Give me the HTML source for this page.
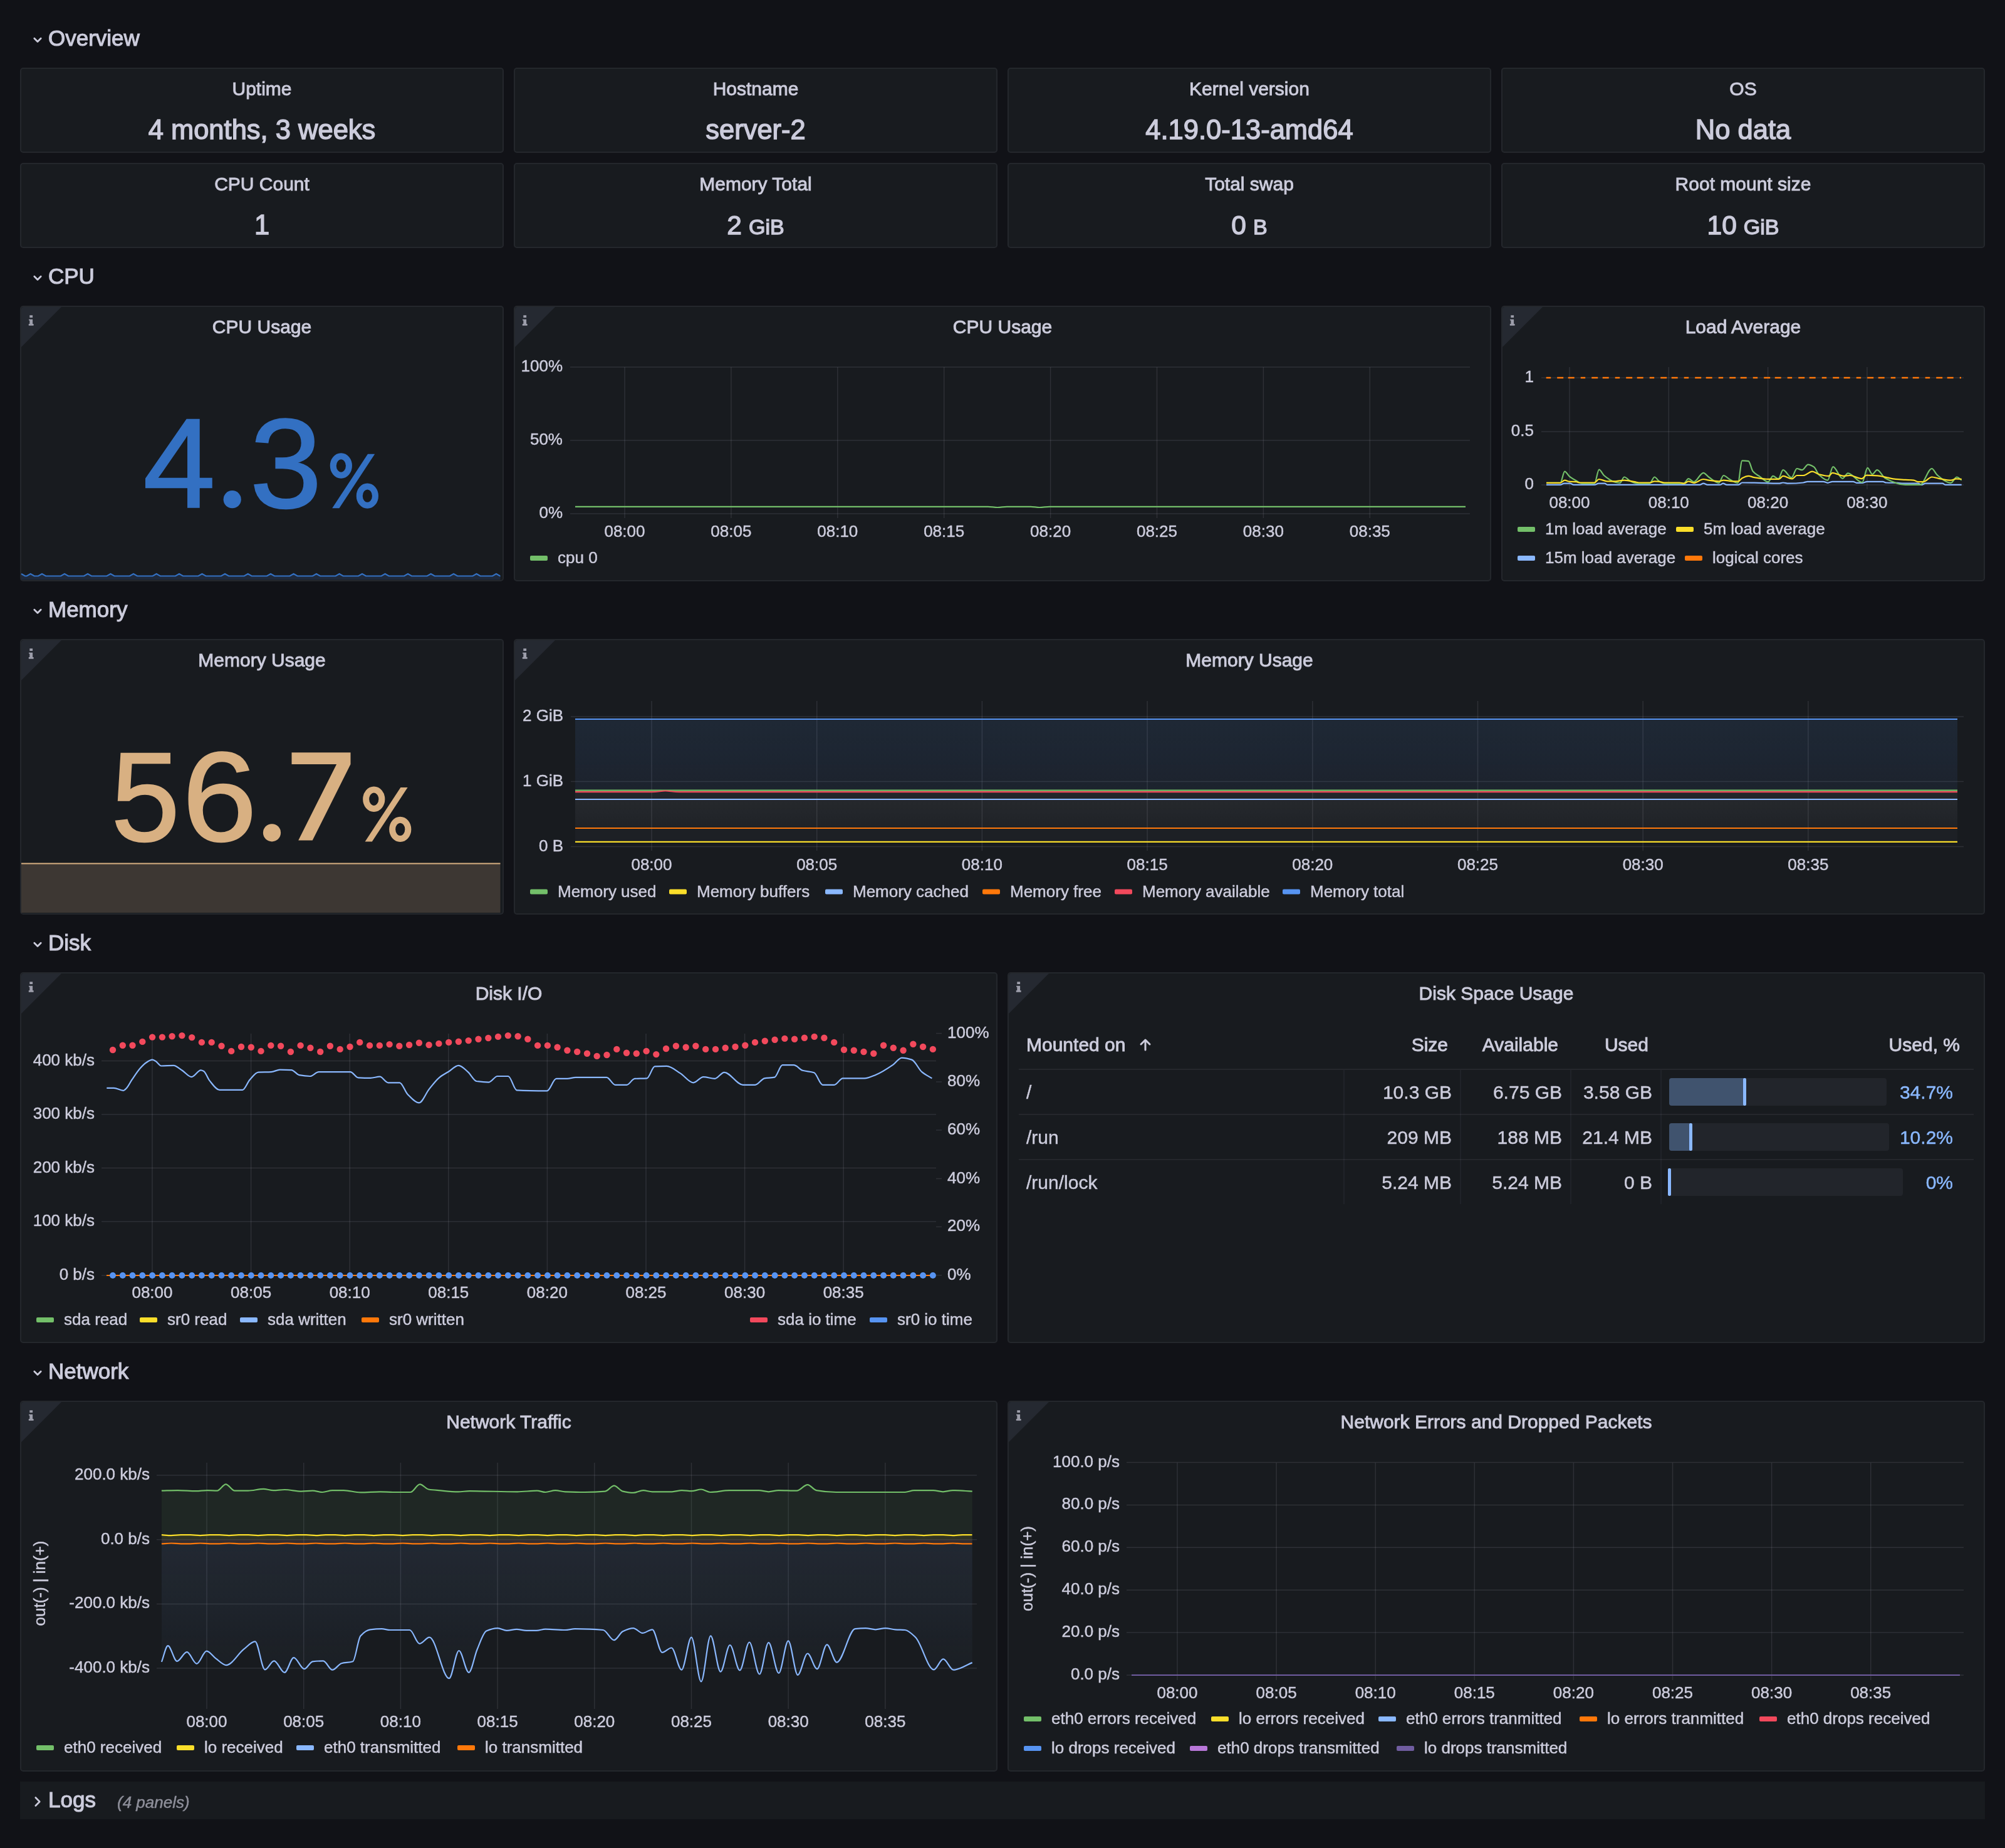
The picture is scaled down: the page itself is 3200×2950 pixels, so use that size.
<!DOCTYPE html>
<html><head><meta charset="utf-8"><title>Node Exporter Dashboard</title>
<style>
html,body{margin:0;padding:0;background:#111217;width:3200px;height:2950px;overflow:hidden}
body{position:relative;font-family:"Liberation Sans", sans-serif}
.p{position:absolute;box-sizing:border-box;background:#181b1f;border:2px solid rgba(204,204,220,0.07);border-radius:5px}
svg{position:absolute;left:0;top:0;will-change:transform}
text{font-family:"Liberation Sans", sans-serif}
.tt,.th{stroke-width:0.9px}
.rt{stroke-width:1.1px}
.tv{stroke-width:1.4px}
</style></head><body>
<div class="p" style="left:32px;top:108px;width:772px;height:136px"></div><div class="p" style="left:820px;top:108px;width:772px;height:136px"></div><div class="p" style="left:1608px;top:108px;width:772px;height:136px"></div><div class="p" style="left:2396px;top:108px;width:772px;height:136px"></div><div class="p" style="left:32px;top:260px;width:772px;height:136px"></div><div class="p" style="left:820px;top:260px;width:772px;height:136px"></div><div class="p" style="left:1608px;top:260px;width:772px;height:136px"></div><div class="p" style="left:2396px;top:260px;width:772px;height:136px"></div><div class="p" style="left:32px;top:488px;width:772px;height:440px"></div><div class="p" style="left:820px;top:488px;width:1560px;height:440px"></div><div class="p" style="left:2396px;top:488px;width:772px;height:440px"></div><div class="p" style="left:32px;top:1020px;width:772px;height:440px"></div><div class="p" style="left:820px;top:1020px;width:2348px;height:440px"></div><div class="p" style="left:32px;top:1552px;width:1560px;height:592px"></div><div class="p" style="left:1608px;top:1552px;width:1560px;height:592px"></div><div class="p" style="left:32px;top:2236px;width:1560px;height:592px"></div><div class="p" style="left:1608px;top:2236px;width:1560px;height:592px"></div>
<svg width="3200" height="2950" viewBox="0 0 3200 2950">
<path d="M54.8 61.3 L60 66.5 L65.2 61.3" fill="none" stroke="#ccccdc" stroke-width="2.8" stroke-linecap="round" stroke-linejoin="round"/>
<text x="77" y="72.5" font-size="35" fill="#ccccdc" stroke="#ccccdc" stroke-width="0.45" text-anchor="start" class="rt">Overview</text>
<path d="M54.8 441.3 L60 446.5 L65.2 441.3" fill="none" stroke="#ccccdc" stroke-width="2.8" stroke-linecap="round" stroke-linejoin="round"/>
<text x="77" y="452.5" font-size="35" fill="#ccccdc" stroke="#ccccdc" stroke-width="0.45" text-anchor="start" class="rt">CPU</text>
<path d="M54.8 973.3 L60 978.5 L65.2 973.3" fill="none" stroke="#ccccdc" stroke-width="2.8" stroke-linecap="round" stroke-linejoin="round"/>
<text x="77" y="984.5" font-size="35" fill="#ccccdc" stroke="#ccccdc" stroke-width="0.45" text-anchor="start" class="rt">Memory</text>
<path d="M54.8 1505.3 L60 1510.5 L65.2 1505.3" fill="none" stroke="#ccccdc" stroke-width="2.8" stroke-linecap="round" stroke-linejoin="round"/>
<text x="77" y="1516.5" font-size="35" fill="#ccccdc" stroke="#ccccdc" stroke-width="0.45" text-anchor="start" class="rt">Disk</text>
<path d="M54.8 2189.3 L60 2194.5 L65.2 2189.3" fill="none" stroke="#ccccdc" stroke-width="2.8" stroke-linecap="round" stroke-linejoin="round"/>
<text x="77" y="2200.5" font-size="35" fill="#ccccdc" stroke="#ccccdc" stroke-width="0.45" text-anchor="start" class="rt">Network</text>
<text x="418" y="152" font-size="30" fill="#ccccdc" stroke="#ccccdc" stroke-width="0.45" text-anchor="middle" class="tt">Uptime</text>
<text x="418" y="221.5" font-size="43.5" fill="#ccccdc" stroke="#ccccdc" stroke-width="0.45" text-anchor="middle" class="tv">4 months, 3 weeks</text>
<text x="1206" y="152" font-size="30" fill="#ccccdc" stroke="#ccccdc" stroke-width="0.45" text-anchor="middle" class="tt">Hostname</text>
<text x="1206" y="221.5" font-size="43.5" fill="#ccccdc" stroke="#ccccdc" stroke-width="0.45" text-anchor="middle" class="tv">server-2</text>
<text x="1994" y="152" font-size="30" fill="#ccccdc" stroke="#ccccdc" stroke-width="0.45" text-anchor="middle" class="tt">Kernel version</text>
<text x="1994" y="221.5" font-size="43.5" fill="#ccccdc" stroke="#ccccdc" stroke-width="0.45" text-anchor="middle" class="tv">4.19.0-13-amd64</text>
<text x="2782" y="152" font-size="30" fill="#ccccdc" stroke="#ccccdc" stroke-width="0.45" text-anchor="middle" class="tt">OS</text>
<text x="2782" y="221.5" font-size="43.5" fill="#ccccdc" stroke="#ccccdc" stroke-width="0.45" text-anchor="middle" class="tv">No data</text>
<text x="418" y="304" font-size="30" fill="#ccccdc" stroke="#ccccdc" stroke-width="0.45" text-anchor="middle" class="tt">CPU Count</text>
<text x="418" y="373.5" font-size="43.5" fill="#ccccdc" stroke="#ccccdc" stroke-width="0.45" text-anchor="middle" class="tv">1</text>
<text x="1206" y="304" font-size="30" fill="#ccccdc" stroke="#ccccdc" stroke-width="0.45" text-anchor="middle" class="tt">Memory Total</text>
<text x="1206" y="373.5" font-size="42.5" fill="#ccccdc" stroke="#ccccdc" text-anchor="middle" class="tv">2<tspan font-size="34" dx="11">GiB</tspan></text>
<text x="1994" y="304" font-size="30" fill="#ccccdc" stroke="#ccccdc" stroke-width="0.45" text-anchor="middle" class="tt">Total swap</text>
<text x="1994" y="373.5" font-size="42.5" fill="#ccccdc" stroke="#ccccdc" text-anchor="middle" class="tv">0<tspan font-size="34" dx="11">B</tspan></text>
<text x="2782" y="304" font-size="30" fill="#ccccdc" stroke="#ccccdc" stroke-width="0.45" text-anchor="middle" class="tt">Root mount size</text>
<text x="2782" y="373.5" font-size="42.5" fill="#ccccdc" stroke="#ccccdc" text-anchor="middle" class="tv">10<tspan font-size="34" dx="11">GiB</tspan></text>
<path d="M34 494 Q34 490 38 490 L98 490 L34 554 Z" fill="#252931"/>
<path transform="translate(32 488)" d="M15.3 15.2 H20.1 V19.1 H15.3 Z M14 21.7 H20.1 V29 H21.6 V31.8 H13.8 V29 H15.3 V23.6 H14 Z" fill="#9d9eab"/>
<text x="418" y="532" font-size="30" fill="#ccccdc" stroke="#ccccdc" stroke-width="0.45" text-anchor="middle" class="tt">CPU Usage</text>
<text transform="translate(228.6 809.8) scale(1.0038 0.9826)" font-size="206" fill="#3370C2" stroke="#3370C2" stroke-width="2.5">4</text>
<circle cx="370.7" cy="797.2" r="14.1" fill="#3370C2"/>
<text transform="translate(398.7 809.8) scale(1.0030 0.9790)" font-size="206" fill="#3370C2" stroke="#3370C2" stroke-width="2.5">3</text>
<g transform="translate(0 0)" fill="none" stroke="#3370C2" stroke-width="10"><ellipse cx="544.35" cy="743.55" rx="12.6" ry="15.2"/><ellipse cx="586.35" cy="791.65" rx="12.6" ry="15.2"/></g>
<path transform="translate(0 0)" d="M530.2 811.2 L541.4 811.2 L598.2 724.8 L587 724.8 Z" fill="#3370C2"/>
<path d="M34 916 L40 919.5 L42.7 919.5 L48.7 916 L54.7 919.5 L61 919.5 L67 916 L73 919.5 L97 919.5 L103 916 L109 919.5 L134 919.5 L140 916 L146 919.5 L170.5 919.5 L176.5 916 L182.5 919.5 L207 919.5 L213 916 L219 919.5 L243.7 919.5 L249.7 916 L255.7 919.5 L280 919.5 L286 916 L292 919.5 L316.5 919.5 L322.5 916 L328.5 919.5 L353 919.5 L359 916 L365 919.5 L389.7 919.5 L395.7 916 L401.7 919.5 L426 919.5 L432 916 L438 919.5 L462.6 919.5 L468.6 916 L474.6 919.5 L499 919.5 L505 916 L511 919.5 L535.6 919.5 L541.6 916 L547.6 919.5 L572 919.5 L578 916 L584 919.5 L608.6 919.5 L614.6 916 L620.6 919.5 L645 919.5 L651 916 L657 919.5 L681.7 919.5 L687.7 916 L693.7 919.5 L718 919.5 L724 916 L730 919.5 L754.5 919.5 L760.5 916 L766.5 919.5 L786 919.5 L792 916 L798 919.5 L798.5 919.5 L798.5 925.5 L34 925.5 Z" fill="#1f2a3c"/>
<path d="M34 916 L40 919.5 L42.7 919.5 L48.7 916 L54.7 919.5 L61 919.5 L67 916 L73 919.5 L97 919.5 L103 916 L109 919.5 L134 919.5 L140 916 L146 919.5 L170.5 919.5 L176.5 916 L182.5 919.5 L207 919.5 L213 916 L219 919.5 L243.7 919.5 L249.7 916 L255.7 919.5 L280 919.5 L286 916 L292 919.5 L316.5 919.5 L322.5 916 L328.5 919.5 L353 919.5 L359 916 L365 919.5 L389.7 919.5 L395.7 916 L401.7 919.5 L426 919.5 L432 916 L438 919.5 L462.6 919.5 L468.6 916 L474.6 919.5 L499 919.5 L505 916 L511 919.5 L535.6 919.5 L541.6 916 L547.6 919.5 L572 919.5 L578 916 L584 919.5 L608.6 919.5 L614.6 916 L620.6 919.5 L645 919.5 L651 916 L657 919.5 L681.7 919.5 L687.7 916 L693.7 919.5 L718 919.5 L724 916 L730 919.5 L754.5 919.5 L760.5 916 L766.5 919.5 L786 919.5 L792 916 L798 919.5 L798.5 919.5" fill="none" stroke="#3370C2" stroke-width="2.2"/>
<path d="M822 494 Q822 490 826 490 L886 490 L822 554 Z" fill="#252931"/>
<path transform="translate(820 488)" d="M15.3 15.2 H20.1 V19.1 H15.3 Z M14 21.7 H20.1 V29 H21.6 V31.8 H13.8 V29 H15.3 V23.6 H14 Z" fill="#9d9eab"/>
<text x="1600" y="532" font-size="30" fill="#ccccdc" stroke="#ccccdc" stroke-width="0.45" text-anchor="middle" class="tt">CPU Usage</text>
<line x1="910" y1="586" x2="2346" y2="586" stroke="rgba(204,204,220,0.12)" stroke-width="1.5" />
<text x="898" y="593" font-size="26" fill="#ccccdc" stroke="#ccccdc" stroke-width="0.45" text-anchor="end" >100%</text>
<line x1="910" y1="703" x2="2346" y2="703" stroke="rgba(204,204,220,0.12)" stroke-width="1.5" />
<text x="898" y="710" font-size="26" fill="#ccccdc" stroke="#ccccdc" stroke-width="0.45" text-anchor="end" >50%</text>
<line x1="910" y1="820" x2="2346" y2="820" stroke="rgba(204,204,220,0.12)" stroke-width="1.5" />
<text x="898" y="827" font-size="26" fill="#ccccdc" stroke="#ccccdc" stroke-width="0.45" text-anchor="end" >0%</text>
<line x1="997" y1="586" x2="997" y2="827" stroke="rgba(204,204,220,0.12)" stroke-width="1.5" />
<text x="997" y="857" font-size="26" fill="#ccccdc" stroke="#ccccdc" stroke-width="0.45" text-anchor="middle" >08:00</text>
<line x1="1166.9" y1="586" x2="1166.9" y2="827" stroke="rgba(204,204,220,0.12)" stroke-width="1.5" />
<text x="1166.9" y="857" font-size="26" fill="#ccccdc" stroke="#ccccdc" stroke-width="0.45" text-anchor="middle" >08:05</text>
<line x1="1336.8" y1="586" x2="1336.8" y2="827" stroke="rgba(204,204,220,0.12)" stroke-width="1.5" />
<text x="1336.8" y="857" font-size="26" fill="#ccccdc" stroke="#ccccdc" stroke-width="0.45" text-anchor="middle" >08:10</text>
<line x1="1506.7" y1="586" x2="1506.7" y2="827" stroke="rgba(204,204,220,0.12)" stroke-width="1.5" />
<text x="1506.7" y="857" font-size="26" fill="#ccccdc" stroke="#ccccdc" stroke-width="0.45" text-anchor="middle" >08:15</text>
<line x1="1676.6" y1="586" x2="1676.6" y2="827" stroke="rgba(204,204,220,0.12)" stroke-width="1.5" />
<text x="1676.6" y="857" font-size="26" fill="#ccccdc" stroke="#ccccdc" stroke-width="0.45" text-anchor="middle" >08:20</text>
<line x1="1846.5" y1="586" x2="1846.5" y2="827" stroke="rgba(204,204,220,0.12)" stroke-width="1.5" />
<text x="1846.5" y="857" font-size="26" fill="#ccccdc" stroke="#ccccdc" stroke-width="0.45" text-anchor="middle" >08:25</text>
<line x1="2016.4" y1="586" x2="2016.4" y2="827" stroke="rgba(204,204,220,0.12)" stroke-width="1.5" />
<text x="2016.4" y="857" font-size="26" fill="#ccccdc" stroke="#ccccdc" stroke-width="0.45" text-anchor="middle" >08:30</text>
<line x1="2186.3" y1="586" x2="2186.3" y2="827" stroke="rgba(204,204,220,0.12)" stroke-width="1.5" />
<text x="2186.3" y="857" font-size="26" fill="#ccccdc" stroke="#ccccdc" stroke-width="0.45" text-anchor="middle" >08:35</text>
<path d="M918 808.9 C1137.7 808.9 1357.3 808.9 1577 808.9 C1582 808.9 1587 810 1592 810 C1597 810 1602 808.9 1607 808.9 C1619.7 808.9 1632.3 808.9 1645 808.9 C1649.7 808.9 1654.3 810 1659 810 C1664.3 810 1669.7 808.9 1675 808.9 C1896.3 808.9 2117.7 808.9 2339 808.9" fill="none" stroke="#73BF69" stroke-width="2.2"/>
<rect x="846" y="887" width="28" height="8" fill="#73BF69" rx="2" />
<text x="890" y="899" font-size="26" fill="#ccccdc" stroke="#ccccdc" stroke-width="0.45" text-anchor="start" >cpu 0</text>
<path d="M2398 494 Q2398 490 2402 490 L2462 490 L2398 554 Z" fill="#252931"/>
<path transform="translate(2396 488)" d="M15.3 15.2 H20.1 V19.1 H15.3 Z M14 21.7 H20.1 V29 H21.6 V31.8 H13.8 V29 H15.3 V23.6 H14 Z" fill="#9d9eab"/>
<text x="2782" y="532" font-size="30" fill="#ccccdc" stroke="#ccccdc" stroke-width="0.45" text-anchor="middle" class="tt">Load Average</text>
<line x1="2460" y1="603" x2="3134" y2="603" stroke="rgba(204,204,220,0.12)" stroke-width="1.5" />
<text x="2448" y="610" font-size="26" fill="#ccccdc" stroke="#ccccdc" stroke-width="0.45" text-anchor="end" >1</text>
<line x1="2460" y1="689" x2="3134" y2="689" stroke="rgba(204,204,220,0.12)" stroke-width="1.5" />
<text x="2448" y="696" font-size="26" fill="#ccccdc" stroke="#ccccdc" stroke-width="0.45" text-anchor="end" >0.5</text>
<line x1="2460" y1="774" x2="3134" y2="774" stroke="rgba(204,204,220,0.12)" stroke-width="1.5" />
<text x="2448" y="781" font-size="26" fill="#ccccdc" stroke="#ccccdc" stroke-width="0.45" text-anchor="end" >0</text>
<line x1="2505" y1="586" x2="2505" y2="781" stroke="rgba(204,204,220,0.12)" stroke-width="1.5" />
<text x="2505" y="811" font-size="26" fill="#ccccdc" stroke="#ccccdc" stroke-width="0.45" text-anchor="middle" >08:00</text>
<line x1="2663.3" y1="586" x2="2663.3" y2="781" stroke="rgba(204,204,220,0.12)" stroke-width="1.5" />
<text x="2663.3" y="811" font-size="26" fill="#ccccdc" stroke="#ccccdc" stroke-width="0.45" text-anchor="middle" >08:10</text>
<line x1="2821.6" y1="586" x2="2821.6" y2="781" stroke="rgba(204,204,220,0.12)" stroke-width="1.5" />
<text x="2821.6" y="811" font-size="26" fill="#ccccdc" stroke="#ccccdc" stroke-width="0.45" text-anchor="middle" >08:20</text>
<line x1="2979.9" y1="586" x2="2979.9" y2="781" stroke="rgba(204,204,220,0.12)" stroke-width="1.5" />
<text x="2979.9" y="811" font-size="26" fill="#ccccdc" stroke="#ccccdc" stroke-width="0.45" text-anchor="middle" >08:30</text>
<path d="M2468 773.9 C2475.3 773.9 2482.7 773.9 2490 773.9 C2492.2 773.9 2494.3 771.7 2496.5 771.7 C2499.6 771.7 2502.7 771.7 2505.8 771.7 C2507.8 771.7 2509.7 773.9 2511.7 773.9 C2522.7 773.9 2533.8 773.9 2544.8 773.9 C2547.1 773.9 2549.3 771.7 2551.6 771.7 C2554.7 771.7 2557.9 771.7 2561 771.7 C2562.7 771.7 2564.3 773.9 2566 773.9 C2614.9 773.9 2663.8 773.9 2712.7 773.9 C2714.7 773.9 2716.6 771.7 2718.6 771.7 C2720.9 771.7 2723.1 773.9 2725.4 773.9 C2731.9 773.9 2738.5 773.9 2745 773.9 C2746.7 773.9 2748.3 771.7 2750 771.7 C2752 771.7 2754 773.9 2756 773.9 C2762.2 773.9 2768.4 773.9 2774.6 773.9 C2776.6 773.9 2778.5 770.5 2780.5 770.5 C2787 770.5 2793.5 770.6 2800 770.7 C2813 770.9 2826 771.7 2839 771.7 C2841.3 771.7 2843.5 770.5 2845.8 770.5 C2848.6 770.5 2851.5 771.7 2854.3 771.7 C2862.2 771.7 2870.1 771.3 2878 770.5 C2880.3 770.3 2882.5 768.8 2884.8 768.8 C2893.3 768.8 2901.7 768.8 2910.2 768.8 C2912.5 768.8 2914.7 770.9 2917 770.9 C2919.5 770.9 2922.1 768.8 2924.6 768.8 C2935.6 768.8 2946.7 768.8 2957.7 768.8 C2959.7 768.8 2961.6 770.9 2963.6 770.9 C2966.7 770.9 2969.9 770.9 2973 770.9 C2975.3 770.9 2977.5 768.8 2979.8 768.8 C2988.3 768.8 2996.7 768.8 3005.2 768.8 C3006.9 768.8 3008.6 770.4 3010.3 770.5 C3016.5 770.8 3022.7 770.7 3028.9 770.9 C3031.7 771 3034.6 771.7 3037.4 771.7 C3045.3 771.7 3053.1 771.7 3061 771.7 C3063 771.7 3065 773.9 3067 773.9 C3069 773.9 3071 771.7 3073 771.7 C3082.1 771.7 3091.1 771.7 3100.2 771.7 C3101.9 771.7 3103.5 773.9 3105.2 773.9 C3113.7 773.9 3122.2 773.9 3130.7 773.9" fill="none" stroke="#8AB8FF" stroke-width="2.2"/>
<path d="M2468.1 770.9 C2475.5 770.9 2482.8 770.9 2490.2 770.9 C2492.6 770.9 2494.9 752.6 2497.3 752.6 C2499.9 752.6 2502.4 758.7 2505 760.7 C2508.7 763.6 2512.3 765.5 2516 767.5 C2518.8 769 2521.6 771.7 2524.4 771.7 C2531.2 771.7 2538 771.7 2544.8 771.7 C2547.2 771.7 2549.7 749.7 2552.1 749.7 C2554.7 749.7 2557.4 756.8 2560 759 C2566.2 764.1 2572.5 768.8 2578.7 770 C2581 770.4 2583.2 770.9 2585.5 770.9 C2587.8 770.9 2590 761.5 2592.3 761.5 C2595.7 761.5 2599 766.8 2602.4 768.3 C2605.8 769.8 2609.2 771.7 2612.6 771.7 C2619.4 771.7 2626.2 771.7 2633 771.7 C2635.5 771.7 2638.1 761.5 2640.6 761.5 C2643.1 761.5 2645.7 766.9 2648.2 768.3 C2651 769.9 2653.9 771.7 2656.7 771.7 C2666.9 771.7 2677 771.7 2687.2 771.7 C2689.8 771.7 2692.3 764.1 2694.9 764.1 C2697.7 764.1 2700.5 769.2 2703.3 769.2 C2708.4 769.2 2713.5 754.8 2718.6 754.8 C2721.4 754.8 2724.3 759.6 2727.1 761.5 C2732.5 765.2 2737.8 770.9 2743.2 770.9 C2745.7 770.9 2748.3 759 2750.8 759 C2753.9 759 2757.1 763.3 2760.2 764.9 C2764.7 767.3 2769.2 770.9 2773.7 770.9 C2776 770.9 2778.2 735.3 2780.5 735.3 C2783.9 735.3 2787.3 735.5 2790.7 736.1 C2793 736.5 2795.2 749.4 2797.5 752.2 C2801.2 756.7 2804.8 758.1 2808.5 760.7 C2813 763.8 2817.5 769.2 2822 769.2 C2824.6 769.2 2827.1 759.9 2829.7 759.9 C2832.5 759.9 2835.4 764.4 2838.2 764.4 C2840.7 764.4 2843.3 750.2 2845.8 750.2 C2850.3 750.2 2854.9 762.4 2859.4 762.4 C2862.2 762.4 2865 748 2867.8 748 C2870.6 748 2873.5 750.2 2876.3 750.2 C2879.4 750.2 2882.5 741.7 2885.6 741.7 C2888.7 741.7 2891.9 743.4 2895 745.4 C2897.8 747.2 2900.6 755.7 2903.4 758.2 C2907.9 762.3 2912.5 766.6 2917 766.6 C2919.8 766.6 2922.7 745.1 2925.5 745.1 C2930.6 745.1 2935.7 763.8 2940.8 763.8 C2943.6 763.8 2946.4 755.3 2949.2 755.3 C2956.8 755.3 2964.5 770 2972.1 770 C2974.9 770 2977.8 746.8 2980.6 746.8 C2983.1 746.8 2985.7 757 2988.2 757 C2990.8 757 2993.3 750.2 2995.9 750.2 C3000.1 750.2 3004.4 760.9 3008.6 763.2 C3019.3 769 3030.1 773.9 3040.8 773.9 C3048.7 773.9 3056.6 773.9 3064.5 773.9 C3070.7 773.9 3077 748 3083.2 748 C3086 748 3088.9 755.9 3091.7 758.2 C3099 764.2 3106.4 770.9 3113.7 770.9 C3116.8 770.9 3119.9 761.5 3123 761.5 C3125.6 761.5 3128.1 764.9 3130.7 766.6" fill="none" stroke="#73BF69" stroke-width="2.2"/>
<path d="M2468 770.9 C2475.3 770.9 2482.7 770.9 2490 770.9 C2492.4 770.9 2494.9 766.6 2497.3 766.6 C2499.9 766.6 2502.4 768.6 2505 768.8 C2508.7 769 2512.3 768.9 2516 769.2 C2517.7 769.3 2519.3 770.5 2521 770.5 C2528.9 770.5 2536.9 770.5 2544.8 770.5 C2547.2 770.5 2549.6 765 2552 765 C2556.3 765 2560.7 768.3 2565 768.3 C2569.6 768.3 2574.1 768.3 2578.7 768.3 C2583.2 768.3 2587.8 766.6 2592.3 766.6 C2597.9 766.6 2603.6 768.2 2609.2 769.2 C2611.5 769.6 2613.7 770.5 2616 770.5 C2621.7 770.5 2627.3 770.5 2633 770.5 C2635.5 770.5 2638.1 768.3 2640.6 768.3 C2643.1 768.3 2645.7 768.6 2648.2 768.8 C2651 769.1 2653.9 770.5 2656.7 770.5 C2664.6 770.5 2672.6 770.5 2680.5 770.5 C2683 770.5 2685.5 771.7 2688 771.7 C2690.3 771.7 2692.6 768.3 2694.9 768.3 C2697.7 768.3 2700.5 770.9 2703.3 770.9 C2708.4 770.9 2713.5 765 2718.6 765 C2721.4 765 2724.3 766.2 2727.1 766.6 C2732.5 767.3 2737.8 768.3 2743.2 768.3 C2745.7 768.3 2748.3 766.6 2750.8 766.6 C2755.6 766.6 2760.4 768.3 2765.2 768.3 C2768.3 768.3 2771.5 768.3 2774.6 768.3 C2776.6 768.3 2778.5 764.2 2780.5 763.2 C2783.9 761.5 2787.3 759.9 2790.7 759.9 C2793.8 759.9 2796.9 761.7 2800 762.2 C2807.3 763.5 2814.7 764.9 2822 764.9 C2827.7 764.9 2833.3 764.9 2839 764.9 C2841.3 764.9 2843.5 759.9 2845.8 759.9 C2850.6 759.9 2855.4 764.4 2860.2 764.4 C2862.7 764.4 2865.3 759 2867.8 759 C2871.2 759 2874.6 759 2878 759 C2882.8 759 2887.6 752.6 2892.4 752.6 C2896.1 752.6 2899.7 756.4 2903.4 757.3 C2908.5 758.6 2913.6 759.9 2918.7 759.9 C2920.7 759.9 2922.6 754.8 2924.6 754.8 C2930.5 754.8 2936.5 759.9 2942.4 759.9 C2945.8 759.9 2949.2 759 2952.6 759 C2958.8 759 2965.1 764.1 2971.3 764.1 C2973.8 764.1 2976.4 758.7 2978.9 758.7 C2984.8 758.7 2990.8 759 2996.7 759.3 C3001.8 759.6 3006.9 761.4 3012 762.4 C3016.5 763.3 3021 764.5 3025.5 764.9 C3030.6 765.4 3035.7 765.5 3040.8 765.8 C3045.3 766.1 3049.9 766.1 3054.4 766.6 C3056.6 766.8 3058.8 769.2 3061 769.2 C3063.9 769.2 3066.7 769.2 3069.6 769.2 C3074.1 769.2 3078.7 761.5 3083.2 761.5 C3087.7 761.5 3092.3 763.7 3096.8 764.4 C3102.4 765.3 3108.1 766.6 3113.7 766.6 C3116.5 766.6 3119.4 764.4 3122.2 764.4 C3125 764.4 3127.9 764.7 3130.7 764.9" fill="none" stroke="#FADE2A" stroke-width="2.2"/>
<line x1="2467.7" y1="603" x2="3130" y2="603" stroke="#FF780A" stroke-width="2.3" stroke-dasharray="7.5 10 10"/>
<rect x="2422" y="841" width="28" height="8" fill="#73BF69" rx="2" />
<text x="2466" y="853" font-size="26" fill="#ccccdc" stroke="#ccccdc" stroke-width="0.45" text-anchor="start" >1m load average</text>
<rect x="2675" y="841" width="28" height="8" fill="#FADE2A" rx="2" />
<text x="2719" y="853" font-size="26" fill="#ccccdc" stroke="#ccccdc" stroke-width="0.45" text-anchor="start" >5m load average</text>
<rect x="2422" y="887" width="28" height="8" fill="#8AB8FF" rx="2" />
<text x="2466" y="899" font-size="26" fill="#ccccdc" stroke="#ccccdc" stroke-width="0.45" text-anchor="start" >15m load average</text>
<rect x="2689" y="887" width="28" height="8" fill="#FF780A" rx="2" />
<text x="2733" y="899" font-size="26" fill="#ccccdc" stroke="#ccccdc" stroke-width="0.45" text-anchor="start" >logical cores</text>
<path d="M34 1026 Q34 1022 38 1022 L98 1022 L34 1086 Z" fill="#252931"/>
<path transform="translate(32 1020)" d="M15.3 15.2 H20.1 V19.1 H15.3 Z M14 21.7 H20.1 V29 H21.6 V31.8 H13.8 V29 H15.3 V23.6 H14 Z" fill="#9d9eab"/>
<text x="418" y="1064" font-size="30" fill="#ccccdc" stroke="#ccccdc" stroke-width="0.45" text-anchor="middle" class="tt">Memory Usage</text>
<text transform="translate(177.2 1341.9) scale(0.9578 0.9821)" font-size="206" fill="#D8B082" stroke="#D8B082" stroke-width="2.5">5</text>
<text transform="translate(291.1 1341.9) scale(1.0379 0.9858)" font-size="206" fill="#D8B082" stroke="#D8B082" stroke-width="2.5">6</text>
<circle cx="434" cy="1329.3" r="14.1" fill="#D8B082"/>
<path d="M465.5 1201.2 L559.5 1201.2 L559.5 1220 L498.7 1341.6 L476.2 1341.6 L537.1 1220 L465.5 1220 Z" fill="#D8B082"/>
<g transform="translate(52.4 532.2)" fill="none" stroke="#D8B082" stroke-width="10"><ellipse cx="544.35" cy="743.55" rx="12.6" ry="15.2"/><ellipse cx="586.35" cy="791.65" rx="12.6" ry="15.2"/></g>
<path transform="translate(52.4 532.2)" d="M530.2 811.2 L541.4 811.2 L598.2 724.8 L587 724.8 Z" fill="#D8B082"/>
<rect x="34" y="1378.5" width="764.5" height="78.5" fill="#3d3733" rx="0" />
<line x1="34" y1="1378.5" x2="798.5" y2="1378.5" stroke="#D8B082" stroke-width="2.2" />
<path d="M822 1026 Q822 1022 826 1022 L886 1022 L822 1086 Z" fill="#252931"/>
<path transform="translate(820 1020)" d="M15.3 15.2 H20.1 V19.1 H15.3 Z M14 21.7 H20.1 V29 H21.6 V31.8 H13.8 V29 H15.3 V23.6 H14 Z" fill="#9d9eab"/>
<text x="1994" y="1064" font-size="30" fill="#ccccdc" stroke="#ccccdc" stroke-width="0.45" text-anchor="middle" class="tt">Memory Usage</text>
<line x1="911" y1="1144" x2="3134" y2="1144" stroke="rgba(204,204,220,0.12)" stroke-width="1.5" />
<text x="899" y="1151" font-size="26" fill="#ccccdc" stroke="#ccccdc" stroke-width="0.45" text-anchor="end" >2 GiB</text>
<line x1="911" y1="1247.5" x2="3134" y2="1247.5" stroke="rgba(204,204,220,0.12)" stroke-width="1.5" />
<text x="899" y="1254.5" font-size="26" fill="#ccccdc" stroke="#ccccdc" stroke-width="0.45" text-anchor="end" >1 GiB</text>
<line x1="911" y1="1351.5" x2="3134" y2="1351.5" stroke="rgba(204,204,220,0.12)" stroke-width="1.5" />
<text x="899" y="1358.5" font-size="26" fill="#ccccdc" stroke="#ccccdc" stroke-width="0.45" text-anchor="end" >0 B</text>
<line x1="1040" y1="1119" x2="1040" y2="1358" stroke="rgba(204,204,220,0.12)" stroke-width="1.5" />
<text x="1040" y="1389" font-size="26" fill="#ccccdc" stroke="#ccccdc" stroke-width="0.45" text-anchor="middle" >08:00</text>
<line x1="1303.7" y1="1119" x2="1303.7" y2="1358" stroke="rgba(204,204,220,0.12)" stroke-width="1.5" />
<text x="1303.7" y="1389" font-size="26" fill="#ccccdc" stroke="#ccccdc" stroke-width="0.45" text-anchor="middle" >08:05</text>
<line x1="1567.4" y1="1119" x2="1567.4" y2="1358" stroke="rgba(204,204,220,0.12)" stroke-width="1.5" />
<text x="1567.4" y="1389" font-size="26" fill="#ccccdc" stroke="#ccccdc" stroke-width="0.45" text-anchor="middle" >08:10</text>
<line x1="1831.1" y1="1119" x2="1831.1" y2="1358" stroke="rgba(204,204,220,0.12)" stroke-width="1.5" />
<text x="1831.1" y="1389" font-size="26" fill="#ccccdc" stroke="#ccccdc" stroke-width="0.45" text-anchor="middle" >08:15</text>
<line x1="2094.8" y1="1119" x2="2094.8" y2="1358" stroke="rgba(204,204,220,0.12)" stroke-width="1.5" />
<text x="2094.8" y="1389" font-size="26" fill="#ccccdc" stroke="#ccccdc" stroke-width="0.45" text-anchor="middle" >08:20</text>
<line x1="2358.5" y1="1119" x2="2358.5" y2="1358" stroke="rgba(204,204,220,0.12)" stroke-width="1.5" />
<text x="2358.5" y="1389" font-size="26" fill="#ccccdc" stroke="#ccccdc" stroke-width="0.45" text-anchor="middle" >08:25</text>
<line x1="2622.2" y1="1119" x2="2622.2" y2="1358" stroke="rgba(204,204,220,0.12)" stroke-width="1.5" />
<text x="2622.2" y="1389" font-size="26" fill="#ccccdc" stroke="#ccccdc" stroke-width="0.45" text-anchor="middle" >08:30</text>
<line x1="2885.9" y1="1119" x2="2885.9" y2="1358" stroke="rgba(204,204,220,0.12)" stroke-width="1.5" />
<text x="2885.9" y="1389" font-size="26" fill="#ccccdc" stroke="#ccccdc" stroke-width="0.45" text-anchor="middle" >08:35</text>
<defs><linearGradient id="mb" x1="0" y1="0" x2="0" y2="1"><stop offset="0" stop-color="rgb(87,148,242)" stop-opacity="0.11"/><stop offset="1" stop-color="rgb(87,148,242)" stop-opacity="0.07"/></linearGradient><linearGradient id="mg" x1="0" y1="0" x2="0" y2="1"><stop offset="0" stop-color="rgb(204,204,220)" stop-opacity="0.075"/><stop offset="1" stop-color="rgb(204,204,220)" stop-opacity="0.045"/></linearGradient></defs>
<rect x="918" y="1148" width="2206" height="113" fill="url(#mb)" rx="0" />
<rect x="918" y="1264" width="2206" height="12" fill="rgba(204,204,220,0.06)" rx="0" />
<rect x="918" y="1276" width="2206" height="46" fill="url(#mg)" rx="0" />
<rect x="918" y="1322" width="2206" height="22" fill="rgba(204,204,220,0.03)" rx="0" />
<line x1="918" y1="1148" x2="3124" y2="1148" stroke="#5794F2" stroke-width="2.2" />
<line x1="918" y1="1261.6" x2="3124" y2="1261.6" stroke="#73BF69" stroke-width="2.2" />
<path d="M918 1264.2 L1040 1264.2 C1050 1264.2 1055 1262.5 1062 1262.5 C1069 1262.5 1074 1264.2 1084 1264.2 L3124 1264.2" fill="none" stroke="#F2495C" stroke-width="2.2"/>
<line x1="918" y1="1276" x2="3124" y2="1276" stroke="#8AB8FF" stroke-width="2.2" />
<line x1="918" y1="1322" x2="3124" y2="1322" stroke="#FF780A" stroke-width="2.2" />
<line x1="918" y1="1343.8" x2="3124" y2="1343.8" stroke="#FADE2A" stroke-width="2.2" />
<rect x="846" y="1419.5" width="28" height="8" fill="#73BF69" rx="2" />
<text x="890" y="1431.5" font-size="26" fill="#ccccdc" stroke="#ccccdc" stroke-width="0.45" text-anchor="start" >Memory used</text>
<rect x="1068" y="1419.5" width="28" height="8" fill="#FADE2A" rx="2" />
<text x="1112" y="1431.5" font-size="26" fill="#ccccdc" stroke="#ccccdc" stroke-width="0.45" text-anchor="start" >Memory buffers</text>
<rect x="1317" y="1419.5" width="28" height="8" fill="#8AB8FF" rx="2" />
<text x="1361" y="1431.5" font-size="26" fill="#ccccdc" stroke="#ccccdc" stroke-width="0.45" text-anchor="start" >Memory cached</text>
<rect x="1568" y="1419.5" width="28" height="8" fill="#FF780A" rx="2" />
<text x="1612" y="1431.5" font-size="26" fill="#ccccdc" stroke="#ccccdc" stroke-width="0.45" text-anchor="start" >Memory free</text>
<rect x="1779" y="1419.5" width="28" height="8" fill="#F2495C" rx="2" />
<text x="1823" y="1431.5" font-size="26" fill="#ccccdc" stroke="#ccccdc" stroke-width="0.45" text-anchor="start" >Memory available</text>
<rect x="2047" y="1419.5" width="28" height="8" fill="#5794F2" rx="2" />
<text x="2091" y="1431.5" font-size="26" fill="#ccccdc" stroke="#ccccdc" stroke-width="0.45" text-anchor="start" >Memory total</text>
<path d="M34 1558 Q34 1554 38 1554 L98 1554 L34 1618 Z" fill="#252931"/>
<path transform="translate(32 1552)" d="M15.3 15.2 H20.1 V19.1 H15.3 Z M14 21.7 H20.1 V29 H21.6 V31.8 H13.8 V29 H15.3 V23.6 H14 Z" fill="#9d9eab"/>
<text x="812" y="1596" font-size="30" fill="#ccccdc" stroke="#ccccdc" stroke-width="0.45" text-anchor="middle" class="tt">Disk I/O</text>
<line x1="162" y1="1693.5" x2="1494" y2="1693.5" stroke="rgba(204,204,220,0.12)" stroke-width="1.5" />
<text x="151" y="1700.5" font-size="26" fill="#ccccdc" stroke="#ccccdc" stroke-width="0.45" text-anchor="end" >400 kb/s</text>
<line x1="162" y1="1779" x2="1494" y2="1779" stroke="rgba(204,204,220,0.12)" stroke-width="1.5" />
<text x="151" y="1786" font-size="26" fill="#ccccdc" stroke="#ccccdc" stroke-width="0.45" text-anchor="end" >300 kb/s</text>
<line x1="162" y1="1864.5" x2="1494" y2="1864.5" stroke="rgba(204,204,220,0.12)" stroke-width="1.5" />
<text x="151" y="1871.5" font-size="26" fill="#ccccdc" stroke="#ccccdc" stroke-width="0.45" text-anchor="end" >200 kb/s</text>
<line x1="162" y1="1950" x2="1494" y2="1950" stroke="rgba(204,204,220,0.12)" stroke-width="1.5" />
<text x="151" y="1957" font-size="26" fill="#ccccdc" stroke="#ccccdc" stroke-width="0.45" text-anchor="end" >100 kb/s</text>
<line x1="162" y1="2036" x2="1494" y2="2036" stroke="rgba(204,204,220,0.12)" stroke-width="1.5" />
<text x="151" y="2043" font-size="26" fill="#ccccdc" stroke="#ccccdc" stroke-width="0.45" text-anchor="end" >0 b/s</text>
<line x1="1494" y1="1649.6" x2="1503" y2="1649.6" stroke="rgba(204,204,220,0.12)" stroke-width="1.5" />
<text x="1512" y="1656.6" font-size="26" fill="#ccccdc" stroke="#ccccdc" stroke-width="0.45" text-anchor="start" >100%</text>
<line x1="1494" y1="1727" x2="1503" y2="1727" stroke="rgba(204,204,220,0.12)" stroke-width="1.5" />
<text x="1512" y="1734" font-size="26" fill="#ccccdc" stroke="#ccccdc" stroke-width="0.45" text-anchor="start" >80%</text>
<line x1="1494" y1="1804" x2="1503" y2="1804" stroke="rgba(204,204,220,0.12)" stroke-width="1.5" />
<text x="1512" y="1811" font-size="26" fill="#ccccdc" stroke="#ccccdc" stroke-width="0.45" text-anchor="start" >60%</text>
<line x1="1494" y1="1881.5" x2="1503" y2="1881.5" stroke="rgba(204,204,220,0.12)" stroke-width="1.5" />
<text x="1512" y="1888.5" font-size="26" fill="#ccccdc" stroke="#ccccdc" stroke-width="0.45" text-anchor="start" >40%</text>
<line x1="1494" y1="1958.4" x2="1503" y2="1958.4" stroke="rgba(204,204,220,0.12)" stroke-width="1.5" />
<text x="1512" y="1965.4" font-size="26" fill="#ccccdc" stroke="#ccccdc" stroke-width="0.45" text-anchor="start" >20%</text>
<line x1="1494" y1="2035.7" x2="1503" y2="2035.7" stroke="rgba(204,204,220,0.12)" stroke-width="1.5" />
<text x="1512" y="2042.7" font-size="26" fill="#ccccdc" stroke="#ccccdc" stroke-width="0.45" text-anchor="start" >0%</text>
<line x1="243" y1="1650" x2="243" y2="2043" stroke="rgba(204,204,220,0.12)" stroke-width="1.5" />
<text x="243" y="2072" font-size="26" fill="#ccccdc" stroke="#ccccdc" stroke-width="0.45" text-anchor="middle" >08:00</text>
<line x1="400.6" y1="1650" x2="400.6" y2="2043" stroke="rgba(204,204,220,0.12)" stroke-width="1.5" />
<text x="400.6" y="2072" font-size="26" fill="#ccccdc" stroke="#ccccdc" stroke-width="0.45" text-anchor="middle" >08:05</text>
<line x1="558.2" y1="1650" x2="558.2" y2="2043" stroke="rgba(204,204,220,0.12)" stroke-width="1.5" />
<text x="558.2" y="2072" font-size="26" fill="#ccccdc" stroke="#ccccdc" stroke-width="0.45" text-anchor="middle" >08:10</text>
<line x1="715.8" y1="1650" x2="715.8" y2="2043" stroke="rgba(204,204,220,0.12)" stroke-width="1.5" />
<text x="715.8" y="2072" font-size="26" fill="#ccccdc" stroke="#ccccdc" stroke-width="0.45" text-anchor="middle" >08:15</text>
<line x1="873.4" y1="1650" x2="873.4" y2="2043" stroke="rgba(204,204,220,0.12)" stroke-width="1.5" />
<text x="873.4" y="2072" font-size="26" fill="#ccccdc" stroke="#ccccdc" stroke-width="0.45" text-anchor="middle" >08:20</text>
<line x1="1031" y1="1650" x2="1031" y2="2043" stroke="rgba(204,204,220,0.12)" stroke-width="1.5" />
<text x="1031" y="2072" font-size="26" fill="#ccccdc" stroke="#ccccdc" stroke-width="0.45" text-anchor="middle" >08:25</text>
<line x1="1188.6" y1="1650" x2="1188.6" y2="2043" stroke="rgba(204,204,220,0.12)" stroke-width="1.5" />
<text x="1188.6" y="2072" font-size="26" fill="#ccccdc" stroke="#ccccdc" stroke-width="0.45" text-anchor="middle" >08:30</text>
<line x1="1346.2" y1="1650" x2="1346.2" y2="2043" stroke="rgba(204,204,220,0.12)" stroke-width="1.5" />
<text x="1346.2" y="2072" font-size="26" fill="#ccccdc" stroke="#ccccdc" stroke-width="0.45" text-anchor="middle" >08:35</text>
<line x1="170" y1="2036" x2="1489" y2="2036" stroke="#FF780A" stroke-width="2.2"/>
<path d="M170.3 1736.8 C174.1 1736.8 178 1736.8 181.8 1736.8 C186.8 1736.8 191.7 1740.9 196.7 1740.9 C198.6 1740.9 200.5 1738.4 202.4 1736.4 C205.1 1733.6 207.8 1727.7 210.5 1723.7 C215.1 1716.9 219.6 1709.7 224.2 1704.7 C227.3 1701.3 230.3 1698.1 233.4 1696.2 C236.6 1694.2 239.8 1691.6 243 1691.6 C244.8 1691.6 246.5 1692.9 248.3 1693.9 C251.4 1695.6 254.4 1701.5 257.5 1701.5 C264 1701.5 270.5 1700.8 277 1700.8 C281.6 1700.8 286.2 1705.9 290.8 1708.8 C295.8 1711.9 300.7 1719.1 305.7 1719.1 C310.7 1719.1 315.6 1708.4 320.6 1708.4 C322.1 1708.4 323.7 1709.2 325.2 1710 C328.3 1711.6 331.3 1721.2 334.4 1724.9 C339.7 1731.4 345.1 1739.8 350.4 1739.8 C362.6 1739.8 374.9 1739.8 387.1 1739.8 C390.9 1739.8 394.8 1727.9 398.6 1723.7 C403.2 1718.7 407.8 1711.8 412.4 1711.6 C419.3 1711.3 426.1 1711.4 433 1711.1 C437.6 1710.9 442.2 1707.7 446.8 1707.7 C452.9 1707.7 459 1707.8 465.1 1708.1 C469.3 1708.3 473.5 1715.4 477.7 1716.2 C483.4 1717.3 489.2 1718 494.9 1718 C499.5 1718 504.1 1711.1 508.7 1711.1 C525.5 1711.1 542.4 1711.1 559.2 1711.1 C563.4 1711.1 567.6 1720.1 571.8 1720.3 C578.3 1720.6 584.8 1720.8 591.3 1720.8 C596.3 1720.8 601.2 1718.7 606.2 1718.7 C610.6 1718.7 615.1 1728.3 619.5 1728.3 C625.6 1728.3 631.8 1728.3 637.9 1728.3 C642.1 1728.3 646.3 1742.5 650.5 1746.7 C656.6 1752.9 662.7 1760.4 668.8 1760.4 C674.2 1760.4 679.5 1745.3 684.9 1738.6 C690.2 1732 695.6 1724.7 700.9 1720.3 C705.9 1716.2 710.9 1713.8 715.9 1710.7 C721.2 1707.3 726.6 1700.8 731.9 1700.8 C736.9 1700.8 741.8 1706.9 746.8 1711.1 C751.4 1715 756 1725.3 760.6 1726 C767.1 1727 773.6 1727.6 780.1 1727.6 C784.7 1727.6 789.3 1718 793.9 1718 C799.6 1718 805.4 1718 811.1 1718 C815.7 1718 820.2 1740 824.8 1740.3 C840.9 1741.2 856.9 1741.4 873 1741.4 C878 1741.4 882.9 1721.9 887.9 1721.9 C893.6 1721.9 899.4 1721.9 905.1 1721.9 C909.7 1721.9 914.3 1719.8 918.9 1719.8 C935.3 1719.8 951.8 1719.8 968.2 1719.8 C972.8 1719.8 977.4 1731.8 982 1731.8 C988.1 1731.8 994.2 1731.8 1000.3 1731.8 C1004.5 1731.8 1008.8 1722.1 1013 1721.9 C1019.5 1721.6 1025.9 1721.8 1032.4 1721.4 C1036.6 1721.2 1040.8 1702.6 1045 1702.4 C1051.4 1702 1057.7 1701.9 1064.1 1701.9 C1071.4 1701.9 1078.6 1709 1085.9 1713.4 C1092.8 1717.6 1099.6 1728.3 1106.5 1728.3 C1111.9 1728.3 1117.2 1719.1 1122.6 1719.1 C1128.7 1719.1 1134.8 1721.9 1140.9 1721.9 C1145.9 1721.9 1150.9 1711.8 1155.9 1711.8 C1165.8 1711.8 1175.8 1731.8 1185.7 1731.8 C1192.2 1731.8 1198.7 1731.8 1205.2 1731.8 C1210.2 1731.8 1215.1 1722.4 1220.1 1721.4 C1225.5 1720.4 1230.8 1720.8 1236.2 1719.6 C1240.4 1718.7 1244.6 1700.1 1248.8 1700.1 C1254.9 1700.1 1261 1700.1 1267.1 1700.1 C1271.7 1700.1 1276.3 1707.4 1280.9 1708.8 C1287 1710.6 1293.1 1710.2 1299.2 1712.3 C1303.8 1713.9 1308.4 1731.8 1313 1731.8 C1319.1 1731.8 1325.3 1731.8 1331.4 1731.8 C1336 1731.8 1340.5 1721.4 1345.1 1721.4 C1356.6 1721.4 1368 1721.4 1379.5 1721.4 C1385.6 1721.4 1391.8 1718.1 1397.9 1715.7 C1407.1 1712.1 1416.2 1705.9 1425.4 1699.6 C1430 1696.4 1434.6 1688.6 1439.2 1688.6 C1444.5 1688.6 1449.9 1689.9 1455.2 1691.6 C1460.6 1693.3 1465.9 1706.6 1471.3 1711.1 C1476.7 1715.6 1482 1718 1487.4 1721.4" fill="none" stroke="#8AB8FF" stroke-width="2.2"/>
<g fill="#F2495C"><circle cx="180" cy="1676" r="5.2"/><circle cx="195.8" cy="1668.7" r="5.2"/><circle cx="211.5" cy="1668.7" r="5.2"/><circle cx="227.3" cy="1662.9" r="5.2"/><circle cx="243.1" cy="1655.6" r="5.2"/><circle cx="258.9" cy="1655.6" r="5.2"/><circle cx="274.6" cy="1654.2" r="5.2"/><circle cx="290.4" cy="1653.1" r="5.2"/><circle cx="306.2" cy="1656.1" r="5.2"/><circle cx="321.9" cy="1663.9" r="5.2"/><circle cx="337.7" cy="1663.9" r="5.2"/><circle cx="353.5" cy="1669.8" r="5.2"/><circle cx="369.2" cy="1677.9" r="5.2"/><circle cx="385" cy="1671" r="5.2"/><circle cx="400.8" cy="1671.7" r="5.2"/><circle cx="416.5" cy="1677.9" r="5.2"/><circle cx="432.3" cy="1668.9" r="5.2"/><circle cx="448.1" cy="1669.8" r="5.2"/><circle cx="463.9" cy="1679" r="5.2"/><circle cx="479.6" cy="1668.9" r="5.2"/><circle cx="495.4" cy="1672.8" r="5.2"/><circle cx="511.2" cy="1679" r="5.2"/><circle cx="526.9" cy="1669.8" r="5.2"/><circle cx="542.7" cy="1674.9" r="5.2"/><circle cx="558.5" cy="1671" r="5.2"/><circle cx="574.2" cy="1663.9" r="5.2"/><circle cx="590" cy="1668.9" r="5.2"/><circle cx="605.8" cy="1668.9" r="5.2"/><circle cx="621.6" cy="1667.1" r="5.2"/><circle cx="637.3" cy="1669.8" r="5.2"/><circle cx="653.1" cy="1668" r="5.2"/><circle cx="668.9" cy="1664.8" r="5.2"/><circle cx="684.6" cy="1668" r="5.2"/><circle cx="700.4" cy="1665.9" r="5.2"/><circle cx="716.2" cy="1663.9" r="5.2"/><circle cx="731.9" cy="1662.7" r="5.2"/><circle cx="747.7" cy="1661.1" r="5.2"/><circle cx="763.5" cy="1658.8" r="5.2"/><circle cx="779.3" cy="1657" r="5.2"/><circle cx="795" cy="1654.9" r="5.2"/><circle cx="810.8" cy="1653.1" r="5.2"/><circle cx="826.6" cy="1654.2" r="5.2"/><circle cx="842.3" cy="1658.8" r="5.2"/><circle cx="858.1" cy="1668.9" r="5.2"/><circle cx="873.9" cy="1668.9" r="5.2"/><circle cx="889.6" cy="1671.7" r="5.2"/><circle cx="905.4" cy="1676.7" r="5.2"/><circle cx="921.2" cy="1679" r="5.2"/><circle cx="937" cy="1681.8" r="5.2"/><circle cx="952.7" cy="1685.9" r="5.2"/><circle cx="968.5" cy="1684" r="5.2"/><circle cx="984.3" cy="1674.9" r="5.2"/><circle cx="1000" cy="1680.8" r="5.2"/><circle cx="1015.8" cy="1681.8" r="5.2"/><circle cx="1031.6" cy="1677.9" r="5.2"/><circle cx="1047.3" cy="1683.1" r="5.2"/><circle cx="1063.1" cy="1674" r="5.2"/><circle cx="1078.9" cy="1669.8" r="5.2"/><circle cx="1094.7" cy="1671.7" r="5.2"/><circle cx="1110.4" cy="1669.8" r="5.2"/><circle cx="1126.2" cy="1674.9" r="5.2"/><circle cx="1142" cy="1674.9" r="5.2"/><circle cx="1157.7" cy="1672.8" r="5.2"/><circle cx="1173.5" cy="1671" r="5.2"/><circle cx="1189.3" cy="1668.7" r="5.2"/><circle cx="1205" cy="1663.9" r="5.2"/><circle cx="1220.8" cy="1661.8" r="5.2"/><circle cx="1236.6" cy="1659.7" r="5.2"/><circle cx="1252.4" cy="1657.9" r="5.2"/><circle cx="1268.1" cy="1658.8" r="5.2"/><circle cx="1283.9" cy="1656.7" r="5.2"/><circle cx="1299.7" cy="1654.9" r="5.2"/><circle cx="1315.4" cy="1656.7" r="5.2"/><circle cx="1331.2" cy="1663.9" r="5.2"/><circle cx="1347" cy="1675.8" r="5.2"/><circle cx="1362.8" cy="1676.7" r="5.2"/><circle cx="1378.5" cy="1679" r="5.2"/><circle cx="1394.3" cy="1681.8" r="5.2"/><circle cx="1410.1" cy="1668.7" r="5.2"/><circle cx="1425.8" cy="1672.8" r="5.2"/><circle cx="1441.6" cy="1676.7" r="5.2"/><circle cx="1457.4" cy="1666.8" r="5.2"/><circle cx="1473.1" cy="1671" r="5.2"/><circle cx="1488.9" cy="1674.9" r="5.2"/></g>
<g fill="#5794F2"><circle cx="180" cy="2036" r="5"/><circle cx="195.8" cy="2036" r="5"/><circle cx="211.5" cy="2036" r="5"/><circle cx="227.3" cy="2036" r="5"/><circle cx="243.1" cy="2036" r="5"/><circle cx="258.9" cy="2036" r="5"/><circle cx="274.6" cy="2036" r="5"/><circle cx="290.4" cy="2036" r="5"/><circle cx="306.2" cy="2036" r="5"/><circle cx="321.9" cy="2036" r="5"/><circle cx="337.7" cy="2036" r="5"/><circle cx="353.5" cy="2036" r="5"/><circle cx="369.2" cy="2036" r="5"/><circle cx="385" cy="2036" r="5"/><circle cx="400.8" cy="2036" r="5"/><circle cx="416.5" cy="2036" r="5"/><circle cx="432.3" cy="2036" r="5"/><circle cx="448.1" cy="2036" r="5"/><circle cx="463.9" cy="2036" r="5"/><circle cx="479.6" cy="2036" r="5"/><circle cx="495.4" cy="2036" r="5"/><circle cx="511.2" cy="2036" r="5"/><circle cx="526.9" cy="2036" r="5"/><circle cx="542.7" cy="2036" r="5"/><circle cx="558.5" cy="2036" r="5"/><circle cx="574.2" cy="2036" r="5"/><circle cx="590" cy="2036" r="5"/><circle cx="605.8" cy="2036" r="5"/><circle cx="621.6" cy="2036" r="5"/><circle cx="637.3" cy="2036" r="5"/><circle cx="653.1" cy="2036" r="5"/><circle cx="668.9" cy="2036" r="5"/><circle cx="684.6" cy="2036" r="5"/><circle cx="700.4" cy="2036" r="5"/><circle cx="716.2" cy="2036" r="5"/><circle cx="731.9" cy="2036" r="5"/><circle cx="747.7" cy="2036" r="5"/><circle cx="763.5" cy="2036" r="5"/><circle cx="779.3" cy="2036" r="5"/><circle cx="795" cy="2036" r="5"/><circle cx="810.8" cy="2036" r="5"/><circle cx="826.6" cy="2036" r="5"/><circle cx="842.3" cy="2036" r="5"/><circle cx="858.1" cy="2036" r="5"/><circle cx="873.9" cy="2036" r="5"/><circle cx="889.6" cy="2036" r="5"/><circle cx="905.4" cy="2036" r="5"/><circle cx="921.2" cy="2036" r="5"/><circle cx="937" cy="2036" r="5"/><circle cx="952.7" cy="2036" r="5"/><circle cx="968.5" cy="2036" r="5"/><circle cx="984.3" cy="2036" r="5"/><circle cx="1000" cy="2036" r="5"/><circle cx="1015.8" cy="2036" r="5"/><circle cx="1031.6" cy="2036" r="5"/><circle cx="1047.3" cy="2036" r="5"/><circle cx="1063.1" cy="2036" r="5"/><circle cx="1078.9" cy="2036" r="5"/><circle cx="1094.7" cy="2036" r="5"/><circle cx="1110.4" cy="2036" r="5"/><circle cx="1126.2" cy="2036" r="5"/><circle cx="1142" cy="2036" r="5"/><circle cx="1157.7" cy="2036" r="5"/><circle cx="1173.5" cy="2036" r="5"/><circle cx="1189.3" cy="2036" r="5"/><circle cx="1205" cy="2036" r="5"/><circle cx="1220.8" cy="2036" r="5"/><circle cx="1236.6" cy="2036" r="5"/><circle cx="1252.4" cy="2036" r="5"/><circle cx="1268.1" cy="2036" r="5"/><circle cx="1283.9" cy="2036" r="5"/><circle cx="1299.7" cy="2036" r="5"/><circle cx="1315.4" cy="2036" r="5"/><circle cx="1331.2" cy="2036" r="5"/><circle cx="1347" cy="2036" r="5"/><circle cx="1362.8" cy="2036" r="5"/><circle cx="1378.5" cy="2036" r="5"/><circle cx="1394.3" cy="2036" r="5"/><circle cx="1410.1" cy="2036" r="5"/><circle cx="1425.8" cy="2036" r="5"/><circle cx="1441.6" cy="2036" r="5"/><circle cx="1457.4" cy="2036" r="5"/><circle cx="1473.1" cy="2036" r="5"/><circle cx="1488.9" cy="2036" r="5"/></g>
<rect x="58" y="2103" width="28" height="8" fill="#73BF69" rx="2" />
<text x="102" y="2115" font-size="26" fill="#ccccdc" stroke="#ccccdc" stroke-width="0.45" text-anchor="start" >sda read</text>
<rect x="223" y="2103" width="28" height="8" fill="#FADE2A" rx="2" />
<text x="267" y="2115" font-size="26" fill="#ccccdc" stroke="#ccccdc" stroke-width="0.45" text-anchor="start" >sr0 read</text>
<rect x="383" y="2103" width="28" height="8" fill="#8AB8FF" rx="2" />
<text x="427" y="2115" font-size="26" fill="#ccccdc" stroke="#ccccdc" stroke-width="0.45" text-anchor="start" >sda written</text>
<rect x="577" y="2103" width="28" height="8" fill="#FF780A" rx="2" />
<text x="621" y="2115" font-size="26" fill="#ccccdc" stroke="#ccccdc" stroke-width="0.45" text-anchor="start" >sr0 written</text>
<rect x="1197" y="2103" width="28" height="8" fill="#F2495C" rx="2" />
<text x="1241" y="2115" font-size="26" fill="#ccccdc" stroke="#ccccdc" stroke-width="0.45" text-anchor="start" >sda io time</text>
<rect x="1388" y="2103" width="28" height="8" fill="#5794F2" rx="2" />
<text x="1432" y="2115" font-size="26" fill="#ccccdc" stroke="#ccccdc" stroke-width="0.45" text-anchor="start" >sr0 io time</text>
<path d="M1610 1558 Q1610 1554 1614 1554 L1674 1554 L1610 1618 Z" fill="#252931"/>
<path transform="translate(1608 1552)" d="M15.3 15.2 H20.1 V19.1 H15.3 Z M14 21.7 H20.1 V29 H21.6 V31.8 H13.8 V29 H15.3 V23.6 H14 Z" fill="#9d9eab"/>
<text x="2388" y="1596" font-size="30" fill="#ccccdc" stroke="#ccccdc" stroke-width="0.45" text-anchor="middle" class="tt">Disk Space Usage</text>
<text x="1638" y="1678" font-size="30" fill="#ccccdc" stroke="#ccccdc" stroke-width="0.45" text-anchor="start" class="th">Mounted on</text>
<path d="M1828 1676 V1660 M1821 1667 L1828 1660 L1835 1667" fill="none" stroke="#ccccdc" stroke-width="3" stroke-linecap="round" stroke-linejoin="round"/>
<text x="2311" y="1678" font-size="30" fill="#ccccdc" stroke="#ccccdc" stroke-width="0.45" text-anchor="end" class="th">Size</text>
<text x="2487" y="1678" font-size="30" fill="#ccccdc" stroke="#ccccdc" stroke-width="0.45" text-anchor="end" class="th">Available</text>
<text x="2631" y="1678" font-size="30" fill="#ccccdc" stroke="#ccccdc" stroke-width="0.45" text-anchor="end" class="th">Used</text>
<text x="3128" y="1678" font-size="30" fill="#ccccdc" stroke="#ccccdc" stroke-width="0.45" text-anchor="end" class="th">Used, %</text>
<line x1="1626" y1="1707" x2="3150" y2="1707" stroke="rgba(204,204,220,0.1)" stroke-width="1.5" />
<line x1="1626" y1="1779" x2="3150" y2="1779" stroke="rgba(204,204,220,0.1)" stroke-width="1.5" />
<line x1="1626" y1="1851" x2="3150" y2="1851" stroke="rgba(204,204,220,0.1)" stroke-width="1.5" />
<line x1="2145" y1="1708" x2="2145" y2="1922" stroke="rgba(204,204,220,0.07)" stroke-width="1.5" />
<line x1="2331" y1="1708" x2="2331" y2="1922" stroke="rgba(204,204,220,0.07)" stroke-width="1.5" />
<line x1="2507" y1="1708" x2="2507" y2="1922" stroke="rgba(204,204,220,0.07)" stroke-width="1.5" />
<line x1="2651" y1="1708" x2="2651" y2="1922" stroke="rgba(204,204,220,0.07)" stroke-width="1.5" />
<text x="1638" y="1754" font-size="30" fill="#ccccdc" stroke="#ccccdc" stroke-width="0.45" text-anchor="start" >/</text>
<text x="2317" y="1754" font-size="30" fill="#ccccdc" stroke="#ccccdc" stroke-width="0.45" text-anchor="end" >10.3 GB</text>
<text x="2493" y="1754" font-size="30" fill="#ccccdc" stroke="#ccccdc" stroke-width="0.45" text-anchor="end" >6.75 GB</text>
<text x="2637" y="1754" font-size="30" fill="#ccccdc" stroke="#ccccdc" stroke-width="0.45" text-anchor="end" >3.58 GB</text>
<rect x="2664" y="1721" width="347" height="44" fill="#22252b" rx="4" />
<rect x="2664" y="1721" width="122" height="44" fill="#40536e" rx="4" />
<rect x="2782" y="1721" width="5" height="44" fill="#8AB8FF" rx="2" />
<text x="3117" y="1754" font-size="30" fill="#8AB8FF" stroke="#8AB8FF" stroke-width="0.45" text-anchor="end" >34.7%</text>
<text x="1638" y="1826" font-size="30" fill="#ccccdc" stroke="#ccccdc" stroke-width="0.45" text-anchor="start" >/run</text>
<text x="2317" y="1826" font-size="30" fill="#ccccdc" stroke="#ccccdc" stroke-width="0.45" text-anchor="end" >209 MB</text>
<text x="2493" y="1826" font-size="30" fill="#ccccdc" stroke="#ccccdc" stroke-width="0.45" text-anchor="end" >188 MB</text>
<text x="2637" y="1826" font-size="30" fill="#ccccdc" stroke="#ccccdc" stroke-width="0.45" text-anchor="end" >21.4 MB</text>
<rect x="2664" y="1793" width="351" height="44" fill="#22252b" rx="4" />
<rect x="2664" y="1793" width="36" height="44" fill="#40536e" rx="4" />
<rect x="2696" y="1793" width="5" height="44" fill="#8AB8FF" rx="2" />
<text x="3117" y="1826" font-size="30" fill="#8AB8FF" stroke="#8AB8FF" stroke-width="0.45" text-anchor="end" >10.2%</text>
<text x="1638" y="1898" font-size="30" fill="#ccccdc" stroke="#ccccdc" stroke-width="0.45" text-anchor="start" >/run/lock</text>
<text x="2317" y="1898" font-size="30" fill="#ccccdc" stroke="#ccccdc" stroke-width="0.45" text-anchor="end" >5.24 MB</text>
<text x="2493" y="1898" font-size="30" fill="#ccccdc" stroke="#ccccdc" stroke-width="0.45" text-anchor="end" >5.24 MB</text>
<text x="2637" y="1898" font-size="30" fill="#ccccdc" stroke="#ccccdc" stroke-width="0.45" text-anchor="end" >0 B</text>
<rect x="2664" y="1865" width="373" height="44" fill="#22252b" rx="4" />
<rect x="2662" y="1865" width="5" height="44" fill="#8AB8FF" rx="2" />
<text x="3117" y="1898" font-size="30" fill="#8AB8FF" stroke="#8AB8FF" stroke-width="0.45" text-anchor="end" >0%</text>
<path d="M34 2242 Q34 2238 38 2238 L98 2238 L34 2302 Z" fill="#252931"/>
<path transform="translate(32 2236)" d="M15.3 15.2 H20.1 V19.1 H15.3 Z M14 21.7 H20.1 V29 H21.6 V31.8 H13.8 V29 H15.3 V23.6 H14 Z" fill="#9d9eab"/>
<text x="812" y="2280" font-size="30" fill="#ccccdc" stroke="#ccccdc" stroke-width="0.45" text-anchor="middle" class="tt">Network Traffic</text>
<line x1="250" y1="2355" x2="1559" y2="2355" stroke="rgba(204,204,220,0.12)" stroke-width="1.5" />
<text x="239" y="2362" font-size="26" fill="#ccccdc" stroke="#ccccdc" stroke-width="0.45" text-anchor="end" >200.0 kb/s</text>
<line x1="250" y1="2457.7" x2="1559" y2="2457.7" stroke="rgba(204,204,220,0.12)" stroke-width="1.5" />
<text x="239" y="2464.7" font-size="26" fill="#ccccdc" stroke="#ccccdc" stroke-width="0.45" text-anchor="end" >0.0 b/s</text>
<line x1="250" y1="2560.4" x2="1559" y2="2560.4" stroke="rgba(204,204,220,0.12)" stroke-width="1.5" />
<text x="239" y="2567.4" font-size="26" fill="#ccccdc" stroke="#ccccdc" stroke-width="0.45" text-anchor="end" >-200.0 kb/s</text>
<line x1="250" y1="2663" x2="1559" y2="2663" stroke="rgba(204,204,220,0.12)" stroke-width="1.5" />
<text x="239" y="2670" font-size="26" fill="#ccccdc" stroke="#ccccdc" stroke-width="0.45" text-anchor="end" >-400.0 kb/s</text>
<line x1="330" y1="2335" x2="330" y2="2728" stroke="rgba(204,204,220,0.12)" stroke-width="1.5" />
<text x="330" y="2757" font-size="26" fill="#ccccdc" stroke="#ccccdc" stroke-width="0.45" text-anchor="middle" >08:00</text>
<line x1="484.7" y1="2335" x2="484.7" y2="2728" stroke="rgba(204,204,220,0.12)" stroke-width="1.5" />
<text x="484.7" y="2757" font-size="26" fill="#ccccdc" stroke="#ccccdc" stroke-width="0.45" text-anchor="middle" >08:05</text>
<line x1="639.4" y1="2335" x2="639.4" y2="2728" stroke="rgba(204,204,220,0.12)" stroke-width="1.5" />
<text x="639.4" y="2757" font-size="26" fill="#ccccdc" stroke="#ccccdc" stroke-width="0.45" text-anchor="middle" >08:10</text>
<line x1="794.1" y1="2335" x2="794.1" y2="2728" stroke="rgba(204,204,220,0.12)" stroke-width="1.5" />
<text x="794.1" y="2757" font-size="26" fill="#ccccdc" stroke="#ccccdc" stroke-width="0.45" text-anchor="middle" >08:15</text>
<line x1="948.8" y1="2335" x2="948.8" y2="2728" stroke="rgba(204,204,220,0.12)" stroke-width="1.5" />
<text x="948.8" y="2757" font-size="26" fill="#ccccdc" stroke="#ccccdc" stroke-width="0.45" text-anchor="middle" >08:20</text>
<line x1="1103.5" y1="2335" x2="1103.5" y2="2728" stroke="rgba(204,204,220,0.12)" stroke-width="1.5" />
<text x="1103.5" y="2757" font-size="26" fill="#ccccdc" stroke="#ccccdc" stroke-width="0.45" text-anchor="middle" >08:25</text>
<line x1="1258.2" y1="2335" x2="1258.2" y2="2728" stroke="rgba(204,204,220,0.12)" stroke-width="1.5" />
<text x="1258.2" y="2757" font-size="26" fill="#ccccdc" stroke="#ccccdc" stroke-width="0.45" text-anchor="middle" >08:30</text>
<line x1="1412.9" y1="2335" x2="1412.9" y2="2728" stroke="rgba(204,204,220,0.12)" stroke-width="1.5" />
<text x="1412.9" y="2757" font-size="26" fill="#ccccdc" stroke="#ccccdc" stroke-width="0.45" text-anchor="middle" >08:35</text>
<text x="72" y="2527.5" font-size="26" fill="#ccccdc" stroke="#ccccdc" stroke-width="0.45" text-anchor="middle" transform="rotate(-90 72 2527.5)">out(-) | in(+)</text>
<defs><linearGradient id="bg1" x1="0" y1="0" x2="0" y2="1"><stop offset="0" stop-color="rgba(138,184,255,0.09)"/><stop offset="1" stop-color="rgba(138,184,255,0.02)"/></linearGradient></defs>
<path d="M257.9 2379.7 C266.5 2379.5 275.1 2379.1 283.7 2379.1 C293.4 2379.1 303.1 2380.2 312.8 2380.2 C318.8 2380.2 324.8 2379.1 330.8 2379.1 C336 2379.1 341.3 2379.7 346.5 2379.7 C351.1 2379.7 355.8 2369.4 360.4 2369.4 C365.1 2369.4 369.9 2379.7 374.6 2379.7 C381.7 2379.7 388.8 2379.7 395.9 2379.7 C404.1 2379.7 412.4 2376.8 420.6 2376.8 C425.8 2376.8 431.1 2379.1 436.3 2379.1 C442.3 2379.1 448.2 2378 454.2 2378 C463.2 2378 472.1 2380.6 481.1 2380.6 C487.1 2380.6 493 2379.7 499 2379.7 C504.3 2379.7 509.5 2382 514.8 2382 C520 2382 525.3 2379.1 530.5 2379.1 C536.5 2379.1 542.5 2379.1 548.5 2379.1 C557.5 2379.1 566.4 2382.4 575.4 2382.4 C585.9 2382.4 596.3 2381.3 606.8 2381.3 C613.5 2381.3 620.3 2382 627 2382 C636.4 2382 645.7 2382 655.1 2382 C660.1 2382 665.1 2369.4 670.1 2369.4 C674.8 2369.4 679.5 2376.7 684.2 2377.5 C689.5 2378.4 694.7 2378.7 700 2379.1 C710.5 2380 720.9 2381.3 731.4 2381.3 C737.4 2381.3 743.4 2380.2 749.4 2380.2 C774.8 2380.2 800.3 2381.3 825.7 2381.3 C836.2 2381.3 846.6 2379.7 857.1 2379.7 C861.6 2379.7 866.1 2382 870.6 2382 C875.8 2382 881.1 2379.1 886.3 2379.1 C891.5 2379.1 896.8 2381.1 902 2381.3 C912.5 2381.7 922.9 2382 933.4 2382 C944.2 2382 955.1 2381.6 965.9 2380.6 C970.6 2380.2 975.4 2371.7 980.1 2371.7 C984.7 2371.7 989.4 2379.5 994 2380.6 C999.6 2381.9 1005.2 2382.9 1010.8 2382.9 C1016 2382.9 1021.3 2379.1 1026.5 2379.1 C1031.4 2379.1 1036.2 2381.3 1041.1 2381.3 C1051.6 2381.3 1062 2381.3 1072.5 2381.3 C1077.7 2381.3 1083 2379.1 1088.2 2379.1 C1093.4 2379.1 1098.7 2380.2 1103.9 2380.2 C1108.9 2380.2 1114 2377.5 1119 2377.5 C1123.9 2377.5 1128.7 2382 1133.6 2382 C1143.7 2382 1153.8 2379.1 1163.9 2379.1 C1179.6 2379.1 1195.3 2379.1 1211 2379.1 C1216.2 2379.1 1221.5 2381.3 1226.7 2381.3 C1231.9 2381.3 1237.2 2379.1 1242.4 2379.1 C1252.1 2379.1 1261.9 2379.7 1271.6 2379.7 C1277.4 2379.7 1283.1 2370.1 1288.9 2370.1 C1293.6 2370.1 1298.3 2378.3 1303 2379.1 C1313.5 2381 1323.9 2382 1334.4 2382 C1345.6 2382 1356.9 2382 1368.1 2382 C1377.8 2382 1387.6 2382 1397.3 2382 C1413 2382 1428.7 2382 1444.4 2382 C1449.3 2382 1454.1 2379.1 1459 2379.1 C1469.1 2379.1 1479.2 2379.1 1489.3 2379.1 C1494.5 2379.1 1499.8 2381.3 1505 2381.3 C1510.2 2381.3 1515.5 2379.1 1520.7 2379.1 C1531 2379.1 1541.4 2380.1 1551.7 2380.6 L1551.7 2457.7 L257.9 2457.7 Z" fill="rgba(115,191,105,0.08)"/>
<path d="M257.9 2652.9 C261.3 2644.3 264.6 2627.1 268 2627.1 C272.8 2627.1 277.7 2651.8 282.5 2651.8 C287.8 2651.8 293 2637.2 298.3 2637.2 C303.5 2637.2 308.8 2655.9 314 2655.9 C319.2 2655.9 324.5 2635.7 329.7 2635.7 C334.6 2635.7 339.4 2643.8 344.3 2647.3 C349.9 2651.3 355.5 2658.1 361.1 2658.1 C370.4 2658.1 379.8 2639.9 389.1 2632.7 C395.1 2628.1 401.1 2620.4 407.1 2620.4 C412.3 2620.4 417.6 2665.3 422.8 2665.3 C427.7 2665.3 432.5 2651.4 437.4 2651.4 C443 2651.4 448.6 2669.8 454.2 2669.8 C459.1 2669.8 463.9 2646.2 468.8 2646.2 C474.4 2646.2 480 2664.2 485.6 2664.2 C490.1 2664.2 494.5 2652.8 499 2652.3 C504.6 2651.7 510.3 2651.4 515.9 2651.4 C520.8 2651.4 525.6 2665.7 530.5 2665.7 C535.4 2665.7 540.2 2656.5 545.1 2655.2 C551.1 2653.6 557.1 2654.3 563.1 2652.3 C567.2 2651 571.3 2615.9 575.4 2611.4 C580.6 2605.6 585.9 2601.9 591.1 2601.3 C597.1 2600.6 603.1 2600.2 609.1 2600.2 C613.6 2600.2 618 2602 622.5 2602 C633 2602 643.4 2602 653.9 2602 C659.2 2602 664.4 2623.8 669.7 2623.8 C674.9 2623.8 680.2 2613.7 685.4 2613.7 C695.9 2613.7 706.3 2679.2 716.8 2679.2 C722 2679.2 727.3 2635 732.5 2635 C737.7 2635 743 2669.8 748.2 2669.8 C752.7 2669.8 757.2 2643.1 761.7 2632.7 C766.6 2621.4 771.4 2605.8 776.3 2603.6 C782.3 2600.9 788.3 2599.1 794.3 2599.1 C799.1 2599.1 804 2602.9 808.8 2602.9 C814.1 2602.9 819.3 2600.9 824.6 2600.9 C829.8 2600.9 835.1 2602.9 840.3 2602.9 C845.5 2602.9 850.8 2602.9 856 2602.9 C860.9 2602.9 865.7 2600.6 870.6 2600.6 C881.1 2600.6 891.5 2602 902 2602 C907.2 2602 912.5 2600.2 917.7 2600.2 C932.7 2600.2 947.6 2600.7 962.6 2602 C968.4 2602.5 974.3 2618.2 980.1 2618.2 C984.7 2618.2 989.4 2606.4 994 2604.2 C999.6 2601.5 1005.2 2599.1 1010.8 2599.1 C1015.7 2599.1 1020.5 2606.9 1025.4 2606.9 C1030.6 2606.9 1035.9 2601.3 1041.1 2601.3 C1046.3 2601.3 1051.6 2637.9 1056.8 2637.9 C1061.8 2637.9 1066.7 2630.5 1071.7 2630.5 C1077.1 2630.5 1082.4 2665.7 1087.8 2665.7 C1093 2665.7 1098.3 2613.7 1103.5 2613.7 C1108.7 2613.7 1113.8 2684.4 1119 2684.4 C1124.1 2684.4 1129.1 2611.4 1134.2 2611.4 C1139.5 2611.4 1144.7 2668.6 1150 2668.6 C1155 2668.6 1160 2626 1165 2626 C1170.2 2626 1175.5 2666.4 1180.7 2666.4 C1185.8 2666.4 1190.9 2621.5 1196 2621.5 C1201.4 2621.5 1206.7 2672.5 1212.1 2672.5 C1217 2672.5 1221.8 2622.2 1226.7 2622.2 C1232.1 2622.2 1237.5 2670.9 1242.9 2670.9 C1248 2670.9 1253 2619.3 1258.1 2619.3 C1263.1 2619.3 1268.2 2673.8 1273.2 2673.8 C1278.4 2673.8 1283.7 2639.5 1288.9 2639.5 C1294 2639.5 1299 2664.2 1304.1 2664.2 C1309.3 2664.2 1314.6 2625.3 1319.8 2625.3 C1325 2625.3 1330.3 2653.6 1335.5 2653.6 C1345.2 2653.6 1355 2601.3 1364.7 2600.2 C1370.3 2599.5 1376 2599.1 1381.6 2599.1 C1386.8 2599.1 1392.1 2601.3 1397.3 2601.3 C1402.5 2601.3 1407.8 2599.1 1413 2599.1 C1418.2 2599.1 1423.5 2600.9 1428.7 2601.3 C1433.9 2601.7 1439.2 2601.6 1444.4 2602 C1450 2602.5 1455.6 2608.3 1461.2 2613.7 C1470.9 2623.1 1480.7 2665.3 1490.4 2665.3 C1495.4 2665.3 1500.4 2648.4 1505.4 2648.4 C1510.9 2648.4 1516.3 2665.7 1521.8 2665.7 C1531.8 2665.7 1541.7 2658 1551.7 2654.1 L1551.7 2457.7 L257.9 2457.7 Z" fill="url(#bg1)"/>
<rect x="257.9" y="2450.2" width="1293.8" height="7.5" fill="rgba(250,222,42,0.08)" rx="0" />
<rect x="257.9" y="2457.7" width="1293.8" height="6.7" fill="rgba(255,120,10,0.08)" rx="0" />
<path d="M257.9 2379.7 C266.5 2379.5 275.1 2379.1 283.7 2379.1 C293.4 2379.1 303.1 2380.2 312.8 2380.2 C318.8 2380.2 324.8 2379.1 330.8 2379.1 C336 2379.1 341.3 2379.7 346.5 2379.7 C351.1 2379.7 355.8 2369.4 360.4 2369.4 C365.1 2369.4 369.9 2379.7 374.6 2379.7 C381.7 2379.7 388.8 2379.7 395.9 2379.7 C404.1 2379.7 412.4 2376.8 420.6 2376.8 C425.8 2376.8 431.1 2379.1 436.3 2379.1 C442.3 2379.1 448.2 2378 454.2 2378 C463.2 2378 472.1 2380.6 481.1 2380.6 C487.1 2380.6 493 2379.7 499 2379.7 C504.3 2379.7 509.5 2382 514.8 2382 C520 2382 525.3 2379.1 530.5 2379.1 C536.5 2379.1 542.5 2379.1 548.5 2379.1 C557.5 2379.1 566.4 2382.4 575.4 2382.4 C585.9 2382.4 596.3 2381.3 606.8 2381.3 C613.5 2381.3 620.3 2382 627 2382 C636.4 2382 645.7 2382 655.1 2382 C660.1 2382 665.1 2369.4 670.1 2369.4 C674.8 2369.4 679.5 2376.7 684.2 2377.5 C689.5 2378.4 694.7 2378.7 700 2379.1 C710.5 2380 720.9 2381.3 731.4 2381.3 C737.4 2381.3 743.4 2380.2 749.4 2380.2 C774.8 2380.2 800.3 2381.3 825.7 2381.3 C836.2 2381.3 846.6 2379.7 857.1 2379.7 C861.6 2379.7 866.1 2382 870.6 2382 C875.8 2382 881.1 2379.1 886.3 2379.1 C891.5 2379.1 896.8 2381.1 902 2381.3 C912.5 2381.7 922.9 2382 933.4 2382 C944.2 2382 955.1 2381.6 965.9 2380.6 C970.6 2380.2 975.4 2371.7 980.1 2371.7 C984.7 2371.7 989.4 2379.5 994 2380.6 C999.6 2381.9 1005.2 2382.9 1010.8 2382.9 C1016 2382.9 1021.3 2379.1 1026.5 2379.1 C1031.4 2379.1 1036.2 2381.3 1041.1 2381.3 C1051.6 2381.3 1062 2381.3 1072.5 2381.3 C1077.7 2381.3 1083 2379.1 1088.2 2379.1 C1093.4 2379.1 1098.7 2380.2 1103.9 2380.2 C1108.9 2380.2 1114 2377.5 1119 2377.5 C1123.9 2377.5 1128.7 2382 1133.6 2382 C1143.7 2382 1153.8 2379.1 1163.9 2379.1 C1179.6 2379.1 1195.3 2379.1 1211 2379.1 C1216.2 2379.1 1221.5 2381.3 1226.7 2381.3 C1231.9 2381.3 1237.2 2379.1 1242.4 2379.1 C1252.1 2379.1 1261.9 2379.7 1271.6 2379.7 C1277.4 2379.7 1283.1 2370.1 1288.9 2370.1 C1293.6 2370.1 1298.3 2378.3 1303 2379.1 C1313.5 2381 1323.9 2382 1334.4 2382 C1345.6 2382 1356.9 2382 1368.1 2382 C1377.8 2382 1387.6 2382 1397.3 2382 C1413 2382 1428.7 2382 1444.4 2382 C1449.3 2382 1454.1 2379.1 1459 2379.1 C1469.1 2379.1 1479.2 2379.1 1489.3 2379.1 C1494.5 2379.1 1499.8 2381.3 1505 2381.3 C1510.2 2381.3 1515.5 2379.1 1520.7 2379.1 C1531 2379.1 1541.4 2380.1 1551.7 2380.6" fill="none" stroke="#73BF69" stroke-width="2.2"/>
<path d="M257.9 2652.9 C261.3 2644.3 264.6 2627.1 268 2627.1 C272.8 2627.1 277.7 2651.8 282.5 2651.8 C287.8 2651.8 293 2637.2 298.3 2637.2 C303.5 2637.2 308.8 2655.9 314 2655.9 C319.2 2655.9 324.5 2635.7 329.7 2635.7 C334.6 2635.7 339.4 2643.8 344.3 2647.3 C349.9 2651.3 355.5 2658.1 361.1 2658.1 C370.4 2658.1 379.8 2639.9 389.1 2632.7 C395.1 2628.1 401.1 2620.4 407.1 2620.4 C412.3 2620.4 417.6 2665.3 422.8 2665.3 C427.7 2665.3 432.5 2651.4 437.4 2651.4 C443 2651.4 448.6 2669.8 454.2 2669.8 C459.1 2669.8 463.9 2646.2 468.8 2646.2 C474.4 2646.2 480 2664.2 485.6 2664.2 C490.1 2664.2 494.5 2652.8 499 2652.3 C504.6 2651.7 510.3 2651.4 515.9 2651.4 C520.8 2651.4 525.6 2665.7 530.5 2665.7 C535.4 2665.7 540.2 2656.5 545.1 2655.2 C551.1 2653.6 557.1 2654.3 563.1 2652.3 C567.2 2651 571.3 2615.9 575.4 2611.4 C580.6 2605.6 585.9 2601.9 591.1 2601.3 C597.1 2600.6 603.1 2600.2 609.1 2600.2 C613.6 2600.2 618 2602 622.5 2602 C633 2602 643.4 2602 653.9 2602 C659.2 2602 664.4 2623.8 669.7 2623.8 C674.9 2623.8 680.2 2613.7 685.4 2613.7 C695.9 2613.7 706.3 2679.2 716.8 2679.2 C722 2679.2 727.3 2635 732.5 2635 C737.7 2635 743 2669.8 748.2 2669.8 C752.7 2669.8 757.2 2643.1 761.7 2632.7 C766.6 2621.4 771.4 2605.8 776.3 2603.6 C782.3 2600.9 788.3 2599.1 794.3 2599.1 C799.1 2599.1 804 2602.9 808.8 2602.9 C814.1 2602.9 819.3 2600.9 824.6 2600.9 C829.8 2600.9 835.1 2602.9 840.3 2602.9 C845.5 2602.9 850.8 2602.9 856 2602.9 C860.9 2602.9 865.7 2600.6 870.6 2600.6 C881.1 2600.6 891.5 2602 902 2602 C907.2 2602 912.5 2600.2 917.7 2600.2 C932.7 2600.2 947.6 2600.7 962.6 2602 C968.4 2602.5 974.3 2618.2 980.1 2618.2 C984.7 2618.2 989.4 2606.4 994 2604.2 C999.6 2601.5 1005.2 2599.1 1010.8 2599.1 C1015.7 2599.1 1020.5 2606.9 1025.4 2606.9 C1030.6 2606.9 1035.9 2601.3 1041.1 2601.3 C1046.3 2601.3 1051.6 2637.9 1056.8 2637.9 C1061.8 2637.9 1066.7 2630.5 1071.7 2630.5 C1077.1 2630.5 1082.4 2665.7 1087.8 2665.7 C1093 2665.7 1098.3 2613.7 1103.5 2613.7 C1108.7 2613.7 1113.8 2684.4 1119 2684.4 C1124.1 2684.4 1129.1 2611.4 1134.2 2611.4 C1139.5 2611.4 1144.7 2668.6 1150 2668.6 C1155 2668.6 1160 2626 1165 2626 C1170.2 2626 1175.5 2666.4 1180.7 2666.4 C1185.8 2666.4 1190.9 2621.5 1196 2621.5 C1201.4 2621.5 1206.7 2672.5 1212.1 2672.5 C1217 2672.5 1221.8 2622.2 1226.7 2622.2 C1232.1 2622.2 1237.5 2670.9 1242.9 2670.9 C1248 2670.9 1253 2619.3 1258.1 2619.3 C1263.1 2619.3 1268.2 2673.8 1273.2 2673.8 C1278.4 2673.8 1283.7 2639.5 1288.9 2639.5 C1294 2639.5 1299 2664.2 1304.1 2664.2 C1309.3 2664.2 1314.6 2625.3 1319.8 2625.3 C1325 2625.3 1330.3 2653.6 1335.5 2653.6 C1345.2 2653.6 1355 2601.3 1364.7 2600.2 C1370.3 2599.5 1376 2599.1 1381.6 2599.1 C1386.8 2599.1 1392.1 2601.3 1397.3 2601.3 C1402.5 2601.3 1407.8 2599.1 1413 2599.1 C1418.2 2599.1 1423.5 2600.9 1428.7 2601.3 C1433.9 2601.7 1439.2 2601.6 1444.4 2602 C1450 2602.5 1455.6 2608.3 1461.2 2613.7 C1470.9 2623.1 1480.7 2665.3 1490.4 2665.3 C1495.4 2665.3 1500.4 2648.4 1505.4 2648.4 C1510.9 2648.4 1516.3 2665.7 1521.8 2665.7 C1531.8 2665.7 1541.7 2658 1551.7 2654.1" fill="none" stroke="#8AB8FF" stroke-width="2.2"/>
<path d="M257.9 2450.2 C263 2450.5 268.2 2451.1 273.3 2451.1 C278.4 2451.1 283.6 2450.2 288.7 2450.2 C293.8 2450.2 299 2450.2 304.1 2450.2 C309.2 2450.2 314.4 2451.1 319.5 2451.1 C324.6 2451.1 329.8 2450.2 334.9 2450.2 C340 2450.2 345.2 2450.2 350.3 2450.2 C355.4 2450.2 360.6 2451.1 365.7 2451.1 C370.8 2451.1 376 2450.2 381.1 2450.2 C386.2 2450.2 391.4 2450.2 396.5 2450.2 C401.6 2450.2 406.8 2451.1 411.9 2451.1 C417 2451.1 422.2 2450.2 427.3 2450.2 C432.4 2450.2 437.6 2450.2 442.7 2450.2 C447.8 2450.2 453 2451.1 458.1 2451.1 C463.2 2451.1 468.4 2450.2 473.5 2450.2 C478.6 2450.2 483.8 2450.2 488.9 2450.2 C494 2450.2 499.2 2451.1 504.3 2451.1 C509.4 2451.1 514.6 2450.2 519.7 2450.2 C524.8 2450.2 530 2450.2 535.1 2450.2 C540.2 2450.2 545.4 2451.1 550.5 2451.1 C555.6 2451.1 560.8 2450.2 565.9 2450.2 C571 2450.2 576.2 2450.2 581.3 2450.2 C586.4 2450.2 591.6 2451.1 596.7 2451.1 C601.8 2451.1 607 2450.2 612.1 2450.2 C617.2 2450.2 622.4 2450.2 627.5 2450.2 C632.6 2450.2 637.8 2451.1 642.9 2451.1 C648 2451.1 653.2 2450.2 658.3 2450.2 C663.4 2450.2 668.6 2450.2 673.7 2450.2 C678.8 2450.2 684 2451.1 689.1 2451.1 C694.2 2451.1 699.4 2450.2 704.5 2450.2 C709.6 2450.2 714.8 2450.2 719.9 2450.2 C725 2450.2 730.2 2451.1 735.3 2451.1 C740.4 2451.1 745.6 2450.2 750.7 2450.2 C755.8 2450.2 761 2450.2 766.1 2450.2 C771.2 2450.2 776.4 2451.1 781.5 2451.1 C786.6 2451.1 791.8 2450.2 796.9 2450.2 C802 2450.2 807.2 2450.2 812.3 2450.2 C817.4 2450.2 822.6 2451.1 827.7 2451.1 C832.8 2451.1 838 2450.2 843.1 2450.2 C848.2 2450.2 853.4 2450.2 858.5 2450.2 C863.6 2450.2 868.8 2451.1 873.9 2451.1 C879 2451.1 884.2 2450.2 889.3 2450.2 C894.4 2450.2 899.6 2450.2 904.7 2450.2 C909.8 2450.2 915 2451.1 920.1 2451.1 C925.2 2451.1 930.4 2450.2 935.5 2450.2 C940.6 2450.2 945.8 2450.2 950.9 2450.2 C956 2450.2 961.2 2451.1 966.3 2451.1 C971.4 2451.1 976.6 2450.2 981.7 2450.2 C986.8 2450.2 992 2450.2 997.1 2450.2 C1002.2 2450.2 1007.4 2451.1 1012.5 2451.1 C1017.6 2451.1 1022.8 2450.2 1027.9 2450.2 C1033 2450.2 1038.2 2450.2 1043.3 2450.2 C1048.4 2450.2 1053.6 2451.1 1058.7 2451.1 C1063.8 2451.1 1069 2450.2 1074.1 2450.2 C1079.2 2450.2 1084.4 2450.2 1089.5 2450.2 C1094.6 2450.2 1099.8 2451.1 1104.9 2451.1 C1110 2451.1 1115.2 2450.2 1120.3 2450.2 C1125.4 2450.2 1130.6 2450.2 1135.7 2450.2 C1140.8 2450.2 1146 2451.1 1151.1 2451.1 C1156.2 2451.1 1161.4 2450.2 1166.5 2450.2 C1171.6 2450.2 1176.8 2450.2 1181.9 2450.2 C1187 2450.2 1192.2 2451.1 1197.3 2451.1 C1202.4 2451.1 1207.6 2450.2 1212.7 2450.2 C1217.8 2450.2 1223 2450.2 1228.1 2450.2 C1233.2 2450.2 1238.4 2451.1 1243.5 2451.1 C1248.6 2451.1 1253.8 2450.2 1258.9 2450.2 C1264 2450.2 1269.2 2450.2 1274.3 2450.2 C1279.4 2450.2 1284.6 2451.1 1289.7 2451.1 C1294.8 2451.1 1300 2450.2 1305.1 2450.2 C1310.2 2450.2 1315.4 2450.2 1320.5 2450.2 C1325.6 2450.2 1330.8 2451.1 1335.9 2451.1 C1341 2451.1 1346.2 2450.2 1351.3 2450.2 C1356.4 2450.2 1361.6 2450.2 1366.7 2450.2 C1371.8 2450.2 1377 2451.1 1382.1 2451.1 C1387.2 2451.1 1392.4 2450.2 1397.5 2450.2 C1402.6 2450.2 1407.8 2450.2 1412.9 2450.2 C1418 2450.2 1423.2 2451.1 1428.3 2451.1 C1433.4 2451.1 1438.6 2450.2 1443.7 2450.2 C1448.8 2450.2 1454 2450.2 1459.1 2450.2 C1464.2 2450.2 1469.4 2451.1 1474.5 2451.1 C1479.6 2451.1 1484.8 2450.2 1489.9 2450.2 C1495 2450.2 1500.2 2450.2 1505.3 2450.2 C1510.4 2450.2 1515.6 2451.1 1520.7 2451.1 C1525.8 2451.1 1531 2450.2 1536.1 2450.2 C1541.2 2450.2 1546.4 2450.2 1551.5 2450.2" fill="none" stroke="#FADE2A" stroke-width="2.2"/>
<path d="M257.9 2464.4 C263 2464.1 268.2 2463.5 273.3 2463.5 C278.4 2463.5 283.6 2464.4 288.7 2464.4 C293.8 2464.4 299 2464.4 304.1 2464.4 C309.2 2464.4 314.4 2463.5 319.5 2463.5 C324.6 2463.5 329.8 2464.4 334.9 2464.4 C340 2464.4 345.2 2464.4 350.3 2464.4 C355.4 2464.4 360.6 2463.5 365.7 2463.5 C370.8 2463.5 376 2464.4 381.1 2464.4 C386.2 2464.4 391.4 2464.4 396.5 2464.4 C401.6 2464.4 406.8 2463.5 411.9 2463.5 C417 2463.5 422.2 2464.4 427.3 2464.4 C432.4 2464.4 437.6 2464.4 442.7 2464.4 C447.8 2464.4 453 2463.5 458.1 2463.5 C463.2 2463.5 468.4 2464.4 473.5 2464.4 C478.6 2464.4 483.8 2464.4 488.9 2464.4 C494 2464.4 499.2 2463.5 504.3 2463.5 C509.4 2463.5 514.6 2464.4 519.7 2464.4 C524.8 2464.4 530 2464.4 535.1 2464.4 C540.2 2464.4 545.4 2463.5 550.5 2463.5 C555.6 2463.5 560.8 2464.4 565.9 2464.4 C571 2464.4 576.2 2464.4 581.3 2464.4 C586.4 2464.4 591.6 2463.5 596.7 2463.5 C601.8 2463.5 607 2464.4 612.1 2464.4 C617.2 2464.4 622.4 2464.4 627.5 2464.4 C632.6 2464.4 637.8 2463.5 642.9 2463.5 C648 2463.5 653.2 2464.4 658.3 2464.4 C663.4 2464.4 668.6 2464.4 673.7 2464.4 C678.8 2464.4 684 2463.5 689.1 2463.5 C694.2 2463.5 699.4 2464.4 704.5 2464.4 C709.6 2464.4 714.8 2464.4 719.9 2464.4 C725 2464.4 730.2 2463.5 735.3 2463.5 C740.4 2463.5 745.6 2464.4 750.7 2464.4 C755.8 2464.4 761 2464.4 766.1 2464.4 C771.2 2464.4 776.4 2463.5 781.5 2463.5 C786.6 2463.5 791.8 2464.4 796.9 2464.4 C802 2464.4 807.2 2464.4 812.3 2464.4 C817.4 2464.4 822.6 2463.5 827.7 2463.5 C832.8 2463.5 838 2464.4 843.1 2464.4 C848.2 2464.4 853.4 2464.4 858.5 2464.4 C863.6 2464.4 868.8 2463.5 873.9 2463.5 C879 2463.5 884.2 2464.4 889.3 2464.4 C894.4 2464.4 899.6 2464.4 904.7 2464.4 C909.8 2464.4 915 2463.5 920.1 2463.5 C925.2 2463.5 930.4 2464.4 935.5 2464.4 C940.6 2464.4 945.8 2464.4 950.9 2464.4 C956 2464.4 961.2 2463.5 966.3 2463.5 C971.4 2463.5 976.6 2464.4 981.7 2464.4 C986.8 2464.4 992 2464.4 997.1 2464.4 C1002.2 2464.4 1007.4 2463.5 1012.5 2463.5 C1017.6 2463.5 1022.8 2464.4 1027.9 2464.4 C1033 2464.4 1038.2 2464.4 1043.3 2464.4 C1048.4 2464.4 1053.6 2463.5 1058.7 2463.5 C1063.8 2463.5 1069 2464.4 1074.1 2464.4 C1079.2 2464.4 1084.4 2464.4 1089.5 2464.4 C1094.6 2464.4 1099.8 2463.5 1104.9 2463.5 C1110 2463.5 1115.2 2464.4 1120.3 2464.4 C1125.4 2464.4 1130.6 2464.4 1135.7 2464.4 C1140.8 2464.4 1146 2463.5 1151.1 2463.5 C1156.2 2463.5 1161.4 2464.4 1166.5 2464.4 C1171.6 2464.4 1176.8 2464.4 1181.9 2464.4 C1187 2464.4 1192.2 2463.5 1197.3 2463.5 C1202.4 2463.5 1207.6 2464.4 1212.7 2464.4 C1217.8 2464.4 1223 2464.4 1228.1 2464.4 C1233.2 2464.4 1238.4 2463.5 1243.5 2463.5 C1248.6 2463.5 1253.8 2464.4 1258.9 2464.4 C1264 2464.4 1269.2 2464.4 1274.3 2464.4 C1279.4 2464.4 1284.6 2463.5 1289.7 2463.5 C1294.8 2463.5 1300 2464.4 1305.1 2464.4 C1310.2 2464.4 1315.4 2464.4 1320.5 2464.4 C1325.6 2464.4 1330.8 2463.5 1335.9 2463.5 C1341 2463.5 1346.2 2464.4 1351.3 2464.4 C1356.4 2464.4 1361.6 2464.4 1366.7 2464.4 C1371.8 2464.4 1377 2463.5 1382.1 2463.5 C1387.2 2463.5 1392.4 2464.4 1397.5 2464.4 C1402.6 2464.4 1407.8 2464.4 1412.9 2464.4 C1418 2464.4 1423.2 2463.5 1428.3 2463.5 C1433.4 2463.5 1438.6 2464.4 1443.7 2464.4 C1448.8 2464.4 1454 2464.4 1459.1 2464.4 C1464.2 2464.4 1469.4 2463.5 1474.5 2463.5 C1479.6 2463.5 1484.8 2464.4 1489.9 2464.4 C1495 2464.4 1500.2 2464.4 1505.3 2464.4 C1510.4 2464.4 1515.6 2463.5 1520.7 2463.5 C1525.8 2463.5 1531 2464.4 1536.1 2464.4 C1541.2 2464.4 1546.4 2464.4 1551.5 2464.4" fill="none" stroke="#FF780A" stroke-width="2.2"/>
<rect x="58" y="2786" width="28" height="8" fill="#73BF69" rx="2" />
<text x="102" y="2798" font-size="26" fill="#ccccdc" stroke="#ccccdc" stroke-width="0.45" text-anchor="start" >eth0 received</text>
<rect x="282" y="2786" width="28" height="8" fill="#FADE2A" rx="2" />
<text x="326" y="2798" font-size="26" fill="#ccccdc" stroke="#ccccdc" stroke-width="0.45" text-anchor="start" >lo received</text>
<rect x="473" y="2786" width="28" height="8" fill="#8AB8FF" rx="2" />
<text x="517" y="2798" font-size="26" fill="#ccccdc" stroke="#ccccdc" stroke-width="0.45" text-anchor="start" >eth0 transmitted</text>
<rect x="730" y="2786" width="28" height="8" fill="#FF780A" rx="2" />
<text x="774" y="2798" font-size="26" fill="#ccccdc" stroke="#ccccdc" stroke-width="0.45" text-anchor="start" >lo transmitted</text>
<path d="M1610 2242 Q1610 2238 1614 2238 L1674 2238 L1610 2302 Z" fill="#252931"/>
<path transform="translate(1608 2236)" d="M15.3 15.2 H20.1 V19.1 H15.3 Z M14 21.7 H20.1 V29 H21.6 V31.8 H13.8 V29 H15.3 V23.6 H14 Z" fill="#9d9eab"/>
<text x="2388" y="2280" font-size="30" fill="#ccccdc" stroke="#ccccdc" stroke-width="0.45" text-anchor="middle" class="tt">Network Errors and Dropped Packets</text>
<line x1="1798" y1="2334.5" x2="3134" y2="2334.5" stroke="rgba(204,204,220,0.12)" stroke-width="1.5" />
<text x="1787" y="2341.5" font-size="26" fill="#ccccdc" stroke="#ccccdc" stroke-width="0.45" text-anchor="end" >100.0 p/s</text>
<line x1="1798" y1="2402.4" x2="3134" y2="2402.4" stroke="rgba(204,204,220,0.12)" stroke-width="1.5" />
<text x="1787" y="2409.4" font-size="26" fill="#ccccdc" stroke="#ccccdc" stroke-width="0.45" text-anchor="end" >80.0 p/s</text>
<line x1="1798" y1="2470.3" x2="3134" y2="2470.3" stroke="rgba(204,204,220,0.12)" stroke-width="1.5" />
<text x="1787" y="2477.3" font-size="26" fill="#ccccdc" stroke="#ccccdc" stroke-width="0.45" text-anchor="end" >60.0 p/s</text>
<line x1="1798" y1="2538.2" x2="3134" y2="2538.2" stroke="rgba(204,204,220,0.12)" stroke-width="1.5" />
<text x="1787" y="2545.2" font-size="26" fill="#ccccdc" stroke="#ccccdc" stroke-width="0.45" text-anchor="end" >40.0 p/s</text>
<line x1="1798" y1="2606.1" x2="3134" y2="2606.1" stroke="rgba(204,204,220,0.12)" stroke-width="1.5" />
<text x="1787" y="2613.1" font-size="26" fill="#ccccdc" stroke="#ccccdc" stroke-width="0.45" text-anchor="end" >20.0 p/s</text>
<line x1="1798" y1="2674" x2="3134" y2="2674" stroke="rgba(204,204,220,0.12)" stroke-width="1.5" />
<text x="1787" y="2681" font-size="26" fill="#ccccdc" stroke="#ccccdc" stroke-width="0.45" text-anchor="end" >0.0 p/s</text>
<line x1="1879" y1="2335" x2="1879" y2="2682" stroke="rgba(204,204,220,0.12)" stroke-width="1.5" />
<text x="1879" y="2711" font-size="26" fill="#ccccdc" stroke="#ccccdc" stroke-width="0.45" text-anchor="middle" >08:00</text>
<line x1="2037.1" y1="2335" x2="2037.1" y2="2682" stroke="rgba(204,204,220,0.12)" stroke-width="1.5" />
<text x="2037.1" y="2711" font-size="26" fill="#ccccdc" stroke="#ccccdc" stroke-width="0.45" text-anchor="middle" >08:05</text>
<line x1="2195.2" y1="2335" x2="2195.2" y2="2682" stroke="rgba(204,204,220,0.12)" stroke-width="1.5" />
<text x="2195.2" y="2711" font-size="26" fill="#ccccdc" stroke="#ccccdc" stroke-width="0.45" text-anchor="middle" >08:10</text>
<line x1="2353.3" y1="2335" x2="2353.3" y2="2682" stroke="rgba(204,204,220,0.12)" stroke-width="1.5" />
<text x="2353.3" y="2711" font-size="26" fill="#ccccdc" stroke="#ccccdc" stroke-width="0.45" text-anchor="middle" >08:15</text>
<line x1="2511.4" y1="2335" x2="2511.4" y2="2682" stroke="rgba(204,204,220,0.12)" stroke-width="1.5" />
<text x="2511.4" y="2711" font-size="26" fill="#ccccdc" stroke="#ccccdc" stroke-width="0.45" text-anchor="middle" >08:20</text>
<line x1="2669.5" y1="2335" x2="2669.5" y2="2682" stroke="rgba(204,204,220,0.12)" stroke-width="1.5" />
<text x="2669.5" y="2711" font-size="26" fill="#ccccdc" stroke="#ccccdc" stroke-width="0.45" text-anchor="middle" >08:25</text>
<line x1="2827.6" y1="2335" x2="2827.6" y2="2682" stroke="rgba(204,204,220,0.12)" stroke-width="1.5" />
<text x="2827.6" y="2711" font-size="26" fill="#ccccdc" stroke="#ccccdc" stroke-width="0.45" text-anchor="middle" >08:30</text>
<line x1="2985.7" y1="2335" x2="2985.7" y2="2682" stroke="rgba(204,204,220,0.12)" stroke-width="1.5" />
<text x="2985.7" y="2711" font-size="26" fill="#ccccdc" stroke="#ccccdc" stroke-width="0.45" text-anchor="middle" >08:35</text>
<text x="1648" y="2504" font-size="26" fill="#ccccdc" stroke="#ccccdc" stroke-width="0.45" text-anchor="middle" transform="rotate(-90 1648 2504)">out(-) | in(+)</text>
<line x1="1806" y1="2674" x2="3128" y2="2674" stroke="#705DA0" stroke-width="2.2" />
<rect x="1634" y="2740" width="28" height="8" fill="#73BF69" rx="2" />
<text x="1678" y="2752" font-size="26" fill="#ccccdc" stroke="#ccccdc" stroke-width="0.45" text-anchor="start" >eth0 errors received</text>
<rect x="1933" y="2740" width="28" height="8" fill="#FADE2A" rx="2" />
<text x="1977" y="2752" font-size="26" fill="#ccccdc" stroke="#ccccdc" stroke-width="0.45" text-anchor="start" >lo errors received</text>
<rect x="2200" y="2740" width="28" height="8" fill="#8AB8FF" rx="2" />
<text x="2244" y="2752" font-size="26" fill="#ccccdc" stroke="#ccccdc" stroke-width="0.45" text-anchor="start" >eth0 errors tranmitted</text>
<rect x="2521" y="2740" width="28" height="8" fill="#FF780A" rx="2" />
<text x="2565" y="2752" font-size="26" fill="#ccccdc" stroke="#ccccdc" stroke-width="0.45" text-anchor="start" >lo errors tranmitted</text>
<rect x="2808" y="2740" width="28" height="8" fill="#F2495C" rx="2" />
<text x="2852" y="2752" font-size="26" fill="#ccccdc" stroke="#ccccdc" stroke-width="0.45" text-anchor="start" >eth0 drops received</text>
<rect x="1634" y="2787" width="28" height="8" fill="#5794F2" rx="2" />
<text x="1678" y="2799" font-size="26" fill="#ccccdc" stroke="#ccccdc" stroke-width="0.45" text-anchor="start" >lo drops received</text>
<rect x="1899" y="2787" width="28" height="8" fill="#B877D9" rx="2" />
<text x="1943" y="2799" font-size="26" fill="#ccccdc" stroke="#ccccdc" stroke-width="0.45" text-anchor="start" >eth0 drops transmitted</text>
<rect x="2229" y="2787" width="28" height="8" fill="#705DA0" rx="2" />
<text x="2273" y="2799" font-size="26" fill="#ccccdc" stroke="#ccccdc" stroke-width="0.45" text-anchor="start" >lo drops transmitted</text>
<rect x="32" y="2844" width="3136" height="60" fill="#181b1f" rx="0" />
<path d="M56.8 2869.5 L63.2 2876 L56.8 2882.5" fill="none" stroke="#ccccdc" stroke-width="2.7" stroke-linecap="round" stroke-linejoin="round"/>
<text x="77" y="2884.5" font-size="35" fill="#ccccdc" stroke="#ccccdc" stroke-width="0.45" text-anchor="start" class="rt">Logs</text>
<text x="187" y="2885.5" font-size="26" fill="#8e8f9a" stroke="#8e8f9a" stroke-width="0.45" text-anchor="start" font-style="italic">(4 panels)</text>
</svg>
</body></html>
